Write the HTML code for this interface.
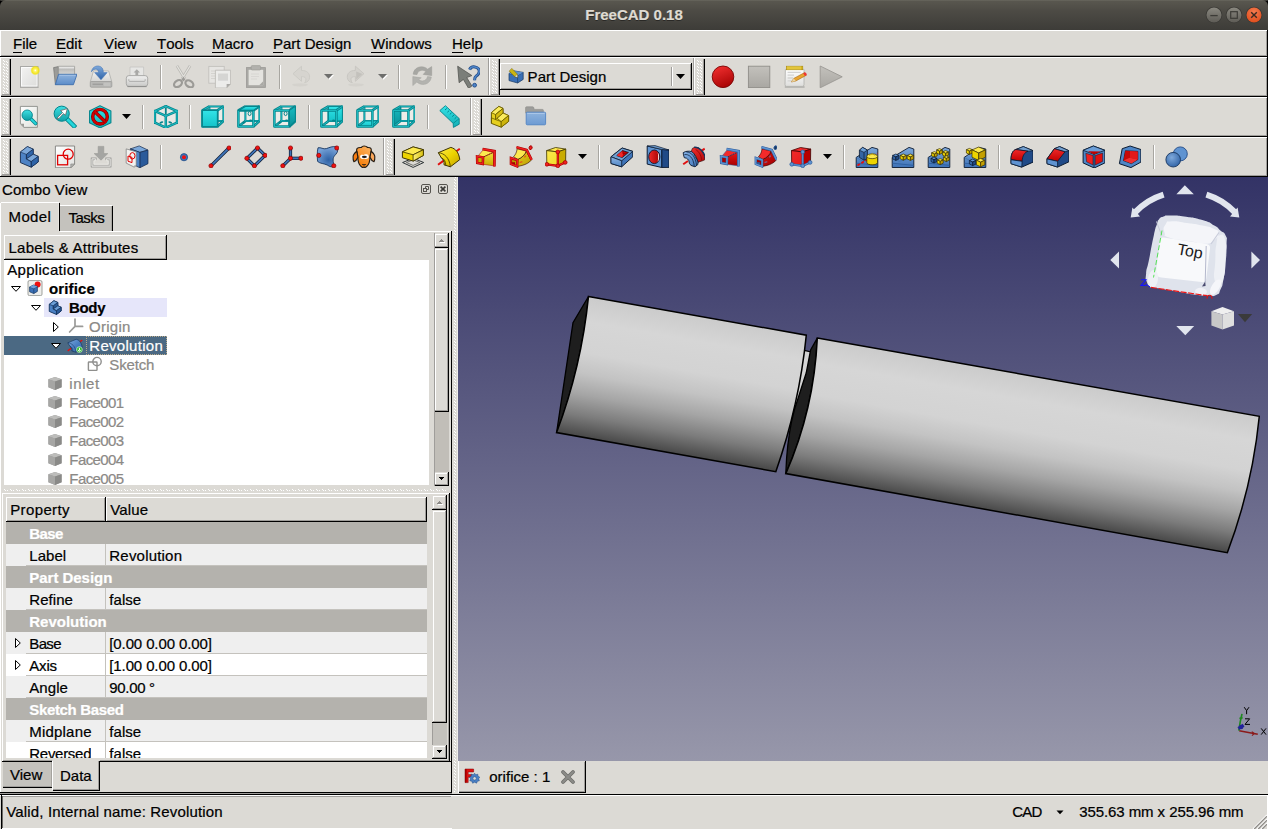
<!DOCTYPE html>
<html><head><meta charset="utf-8"><title>FreeCAD 0.18</title>
<style>
html,body{margin:0;padding:0;}
body{width:1268px;height:830px;overflow:hidden;background:#dcdad5;position:relative;font-family:"Liberation Sans",sans-serif;}
div,svg{position:absolute;box-sizing:border-box;}
.t{white-space:nowrap;line-height:20px;height:20px;-webkit-text-stroke:0.22px currentColor;}
u{text-decoration:none;border-bottom:1px solid #000;display:inline-block;line-height:13px;padding-bottom:2px;}
</style></head>
<body>
<div style="left:0px;top:0px;width:1268px;height:8px;background:#000;"></div>
<div style="left:0px;top:0px;width:1268px;height:30px;background:linear-gradient(#5a5850 0%,#4d4b45 35%,#3d3c38 100%);border-radius:6px 6px 0 0;"></div>
<div style="left:0px;top:0px;width:1268px;height:1px;background:#6b6960;border-radius:6px 6px 0 0;opacity:.6"></div>
<div class="t" style="left:534px;top:5px;font-size:15px;color:#dfdbd2;font-weight:bold;letter-spacing:0px;text-align:center;text-shadow:0 1px 0 #2a2926;width:200px;">FreeCAD 0.18</div>
<svg style="left:1205px;top:6px" width="18" height="18" viewBox="0 0 18 18"><defs><linearGradient id="gmin" x1="0" y1="0" x2="0" y2="1"><stop offset="0" stop-color="#8a8880"/><stop offset="1" stop-color="#5e5c56"/></linearGradient></defs><circle cx="9" cy="9" r="8.3" fill="#3a3935"/><circle cx="9" cy="9" r="7.5" fill="url(#gmin)"/><path d="M5.3 9.6H12.7" stroke="#3c3b37" stroke-width="1.3"/></svg>
<svg style="left:1225px;top:6px" width="18" height="18" viewBox="0 0 18 18"><defs><linearGradient id="gmax" x1="0" y1="0" x2="0" y2="1"><stop offset="0" stop-color="#8a8880"/><stop offset="1" stop-color="#5e5c56"/></linearGradient></defs><circle cx="9" cy="9" r="8.3" fill="#3a3935"/><circle cx="9" cy="9" r="7.5" fill="url(#gmax)"/><rect x="5.7" y="5.7" width="6.6" height="6.6" fill="none" stroke="#3c3b37" stroke-width="1.2"/></svg>
<svg style="left:1245px;top:6px" width="18" height="18" viewBox="0 0 18 18"><defs><radialGradient id="gc" cx="50%" cy="30%" r="70%"><stop offset="0" stop-color="#f47b4f"/><stop offset="1" stop-color="#df4e1d"/></radialGradient></defs><circle cx="9" cy="9" r="8.3" fill="#3a3935"/><circle cx="9" cy="9" r="7.5" fill="url(#gc)"/><path d="M6.2 6.2L11.8 11.8M11.8 6.2L6.2 11.8" stroke="#3b2a22" stroke-width="1.4" fill="none"/></svg>
<div style="left:0px;top:30px;width:1268px;height:1px;background:#fff;"></div>
<div style="left:0px;top:30px;width:1px;height:27px;background:#fff;"></div>
<div style="left:0px;top:56px;width:1268px;height:1px;background:#000;"></div>
<div style="left:1px;top:55px;width:1266px;height:1px;background:#9f9d9a;"></div>
<div style="left:1266px;top:31px;width:1px;height:25px;background:#9f9d9a;"></div>
<div style="left:1267px;top:30px;width:1px;height:27px;background:#000;"></div>
<div class="t" style="left:13px;top:34px;font-size:15px;color:#000;font-weight:normal;letter-spacing:0px;"><u>F</u>ile</div>
<div class="t" style="left:56px;top:34px;font-size:15px;color:#000;font-weight:normal;letter-spacing:0px;"><u>E</u>dit</div>
<div class="t" style="left:104px;top:34px;font-size:15px;color:#000;font-weight:normal;letter-spacing:0px;"><u>V</u>iew</div>
<div class="t" style="left:157px;top:34px;font-size:15px;color:#000;font-weight:normal;letter-spacing:0px;"><u>T</u>ools</div>
<div class="t" style="left:212px;top:34px;font-size:15px;color:#000;font-weight:normal;letter-spacing:0px;"><u>M</u>acro</div>
<div class="t" style="left:273px;top:34px;font-size:15px;color:#000;font-weight:normal;letter-spacing:0px;"><u>P</u>art Design</div>
<div class="t" style="left:371px;top:34px;font-size:15px;color:#000;font-weight:normal;letter-spacing:0px;"><u>W</u>indows</div>
<div class="t" style="left:452px;top:34px;font-size:15px;color:#000;font-weight:normal;letter-spacing:0px;"><u>H</u>elp</div>
<div style="left:0px;top:57px;width:1268px;height:1px;background:#fff;"></div>
<div style="left:0px;top:96px;width:1268px;height:1px;background:#000;"></div>
<div style="left:1px;top:95px;width:1266px;height:1px;background:#9f9d9a;"></div>
<div style="left:1266px;top:58px;width:1px;height:38px;background:#9f9d9a;"></div>
<div style="left:1267px;top:57px;width:1px;height:40px;background:#000;"></div>
<div style="left:0px;top:97px;width:1268px;height:1px;background:#fff;"></div>
<div style="left:0px;top:136px;width:1268px;height:1px;background:#000;"></div>
<div style="left:1px;top:135px;width:1266px;height:1px;background:#9f9d9a;"></div>
<div style="left:1266px;top:98px;width:1px;height:38px;background:#9f9d9a;"></div>
<div style="left:1267px;top:97px;width:1px;height:40px;background:#000;"></div>
<div style="left:0px;top:137px;width:1268px;height:1px;background:#fff;"></div>
<div style="left:0px;top:176px;width:1268px;height:1px;background:#000;"></div>
<div style="left:1px;top:175px;width:1266px;height:1px;background:#9f9d9a;"></div>
<div style="left:1266px;top:138px;width:1px;height:38px;background:#9f9d9a;"></div>
<div style="left:1267px;top:137px;width:1px;height:40px;background:#000;"></div>
<div style="left:0px;top:57px;width:1px;height:120px;background:#fff;"></div>
<svg width="0" height="0" style="left:0;top:0"><defs><pattern id="hatch" width="2" height="2" patternUnits="userSpaceOnUse"><rect width="2" height="2" fill="#dcdad5"/><rect x="0" y="0" width="1" height="1" fill="#fff"/><rect x="1" y="1" width="1" height="1" fill="#fff"/></pattern><pattern id="hdl" width="8" height="3" patternUnits="userSpaceOnUse"><rect x="1" y="0" width="1" height="1" fill="#fff"/><rect x="2" y="1" width="1" height="1" fill="#fff"/><rect x="4" y="1" width="1" height="1" fill="#fff"/><rect x="5" y="2" width="1" height="1" fill="#fff"/></pattern><pattern id="vsp" width="2" height="3" patternUnits="userSpaceOnUse"><rect x="0" y="2" width="1" height="1" fill="#fff"/><rect x="1" y="0" width="1" height="1" fill="#fff"/></pattern><pattern id="hsp" width="6" height="2" patternUnits="userSpaceOnUse"><rect x="0" y="0" width="1" height="1" fill="#fff"/><rect x="1" y="1" width="1" height="1" fill="#fff"/><rect x="3" y="1" width="1" height="1" fill="#fff"/></pattern></defs></svg>
<svg style="left:2px;top:60px" width="7" height="34" viewBox="0 0 7 34"><rect width="7" height="34" fill="url(#hdl)"/></svg>
<div style="left:9px;top:59px;width:1px;height:36px;background:#9f9d9a;"></div>
<div style="left:10px;top:59px;width:1px;height:36px;background:#000;"></div>
<div style="left:2px;top:94px;width:8px;height:1px;background:#9f9d9a;"></div>
<div style="left:488px;top:58px;width:1px;height:37px;background:#9f9d9a;"></div>
<div style="left:489px;top:58px;width:1px;height:37px;background:#fff;"></div>
<svg style="left:491px;top:60px" width="7" height="34" viewBox="0 0 7 34"><rect width="7" height="34" fill="url(#hdl)"/></svg>
<div style="left:498px;top:59px;width:1px;height:36px;background:#9f9d9a;"></div>
<div style="left:499px;top:59px;width:1px;height:36px;background:#000;"></div>
<div style="left:491px;top:94px;width:8px;height:1px;background:#9f9d9a;"></div>
<div style="left:693px;top:58px;width:1px;height:37px;background:#9f9d9a;"></div>
<div style="left:694px;top:58px;width:1px;height:37px;background:#fff;"></div>
<svg style="left:696px;top:60px" width="7" height="34" viewBox="0 0 7 34"><rect width="7" height="34" fill="url(#hdl)"/></svg>
<div style="left:703px;top:59px;width:1px;height:36px;background:#9f9d9a;"></div>
<div style="left:704px;top:59px;width:1px;height:36px;background:#000;"></div>
<div style="left:696px;top:94px;width:8px;height:1px;background:#9f9d9a;"></div>
<svg style="left:2px;top:100px" width="7" height="34" viewBox="0 0 7 34"><rect width="7" height="34" fill="url(#hdl)"/></svg>
<div style="left:9px;top:99px;width:1px;height:36px;background:#9f9d9a;"></div>
<div style="left:10px;top:99px;width:1px;height:36px;background:#000;"></div>
<div style="left:2px;top:134px;width:8px;height:1px;background:#9f9d9a;"></div>
<div style="left:470px;top:98px;width:1px;height:37px;background:#9f9d9a;"></div>
<div style="left:471px;top:98px;width:1px;height:37px;background:#fff;"></div>
<svg style="left:473px;top:100px" width="7" height="34" viewBox="0 0 7 34"><rect width="7" height="34" fill="url(#hdl)"/></svg>
<div style="left:480px;top:99px;width:1px;height:36px;background:#9f9d9a;"></div>
<div style="left:481px;top:99px;width:1px;height:36px;background:#000;"></div>
<div style="left:473px;top:134px;width:8px;height:1px;background:#9f9d9a;"></div>
<svg style="left:2px;top:140px" width="7" height="34" viewBox="0 0 7 34"><rect width="7" height="34" fill="url(#hdl)"/></svg>
<div style="left:9px;top:139px;width:1px;height:36px;background:#9f9d9a;"></div>
<div style="left:10px;top:139px;width:1px;height:36px;background:#000;"></div>
<div style="left:2px;top:174px;width:8px;height:1px;background:#9f9d9a;"></div>
<div style="left:383px;top:138px;width:1px;height:37px;background:#9f9d9a;"></div>
<div style="left:384px;top:138px;width:1px;height:37px;background:#fff;"></div>
<svg style="left:386px;top:140px" width="7" height="34" viewBox="0 0 7 34"><rect width="7" height="34" fill="url(#hdl)"/></svg>
<div style="left:393px;top:139px;width:1px;height:36px;background:#9f9d9a;"></div>
<div style="left:394px;top:139px;width:1px;height:36px;background:#000;"></div>
<div style="left:386px;top:174px;width:8px;height:1px;background:#9f9d9a;"></div>
<div style="left:458px;top:177px;width:810px;height:584px;background:linear-gradient(#333366,#9797aa);"></div>
<div style="left:0px;top:176px;width:1268px;height:1px;background:#000;"></div>
<div class="t" style="left:2px;top:180px;font-size:15px;color:#000;font-weight:normal;letter-spacing:0.054px;">Combo View</div>
<svg style="left:420px;top:183px" width="30" height="12" viewBox="0 0 30 12"><g fill="none" stroke="#55534e" stroke-width="1"><rect x="1.5" y="1.5" width="9" height="9" rx="1.5"/><rect x="3.5" y="5.5" width="3" height="3" /><path d="M5.5 5.5V3.5H8.5V6.5H6.5"/><rect x="18.5" y="1.5" width="9" height="9" rx="1.5"/></g><path d="M20.6 3.6L25.4 8.4M25.4 3.6L20.6 8.4" stroke="#3a3936" stroke-width="1.6"/></svg>
<div style="left:1px;top:202px;width:58px;height:1px;background:#fff;"></div>
<div style="left:59px;top:203px;width:1px;height:28px;background:#000;"></div>
<div style="left:58px;top:203px;width:1px;height:28px;background:#e6e4df;"></div>
<div class="t" style="left:8.5px;top:207px;font-size:15px;color:#000;font-weight:normal;letter-spacing:0.389px;">Model</div>
<div style="left:60px;top:206px;width:52px;height:25px;background:#c4c2bd;"></div>
<div style="left:60px;top:205px;width:52px;height:1px;background:#fff;"></div>
<div style="left:112px;top:206px;width:1px;height:25px;background:#000;"></div>
<div style="left:111px;top:206px;width:1px;height:25px;background:#aaa8a3;"></div>
<div class="t" style="left:68.4px;top:208px;font-size:15px;color:#000;font-weight:normal;letter-spacing:-0.488px;">Tasks</div>
<div style="left:60px;top:231px;width:391px;height:1px;background:#fff;"></div>
<div style="left:451px;top:231px;width:1px;height:562px;background:#000;"></div>
<div style="left:0px;top:203px;width:1px;height:590px;background:#fff;"></div>
<div style="left:4px;top:235px;width:163px;height:1px;background:#fff;"></div>
<div style="left:4px;top:235px;width:1px;height:25px;background:#fff;"></div>
<div style="left:166px;top:235px;width:1px;height:25px;background:#000;"></div>
<div style="left:4px;top:259px;width:163px;height:1px;background:#000;"></div>
<div style="left:165px;top:236px;width:1px;height:23px;background:#9f9d9a;"></div>
<div style="left:5px;top:258px;width:161px;height:1px;background:#9f9d9a;"></div>
<div class="t" style="left:8.5px;top:238px;font-size:15px;color:#000;font-weight:normal;letter-spacing:0.254px;">Labels &amp; Attributes</div>
<div style="left:4px;top:260px;width:425px;height:225px;background:#fff;"></div>
<div class="t" style="left:7.2px;top:260px;font-size:15px;color:#000;font-weight:normal;letter-spacing:0.311px;">Application</div>
<svg style="left:10.5px;top:286px" width="10" height="6" viewBox="0 0 10 6"><path d="M0.5 0.5H9.5L5 5.3Z" fill="#fff" stroke="#000" stroke-width="1"/></svg>
<svg style="left:27px;top:280px" width="16" height="16" viewBox="0 0 16 16"><rect x="1" y="0.6" width="14" height="15" rx="1.4" fill="#eeeeec" stroke="#888a85" stroke-width=".8"/><circle cx="10.6" cy="4.4" r="3" fill="#ef1010"/><path d="M2.6 7L6.4 5L10.4 6.6V11.4L6.8 13.6L2.6 11.8Z" fill="#3a6fb5" stroke="#17365f" stroke-width=".7" stroke-linejoin="round"/><path d="M2.6 7L6.8 8.6L10.4 6.6M6.8 8.6V13.6" fill="none" stroke="#17365f" stroke-width=".6"/><path d="M2.6 7L6.4 5L10.4 6.6L6.8 8.6Z" fill="#6c9fd8"/></svg>
<div class="t" style="left:49px;top:279px;font-size:15px;color:#000;font-weight:bold;letter-spacing:0.141px;">orifice</div>
<div style="left:44px;top:298px;width:123px;height:19px;background:#e6e6fa;"></div>
<svg style="left:30.5px;top:305px" width="10" height="6" viewBox="0 0 10 6"><path d="M0.5 0.5H9.5L5 5.3Z" fill="#fff" stroke="#000" stroke-width="1"/></svg>
<svg style="left:47px;top:299px" width="16" height="16" viewBox="0 0 16 16"><g transform="scale(.667)"><path d="M3.4 8L10.4 2.6L16.2 5.2V10.2L21.2 12.4V18L14.2 23.2L3.4 18.6Z" fill="#4a80c4" stroke="#17365f" stroke-width="1.4000000000000001" stroke-linejoin="round"/><path d="M3.4 8L10.4 2.6L16.2 5.2L9.4 10.4Z" fill="#6c9fd8" stroke="#17365f" stroke-width="1.1" stroke-linejoin="round"/><path d="M9.4 10.4L16.2 5.2V10.2L10 14.4V14.4L9.4 15Z" fill="#2a5a9a" stroke="#17365f" stroke-width="1.1" stroke-linejoin="round"/><path d="M9.4 15L16.2 10.2L21.2 12.4L14.2 17.6Z" fill="#6c9fd8" stroke="#17365f" stroke-width="1.1" stroke-linejoin="round"/><path d="M14.2 17.6L21.2 12.4V18L14.2 23.2Z" fill="#2a5a9a" stroke="#17365f" stroke-width="1.1" stroke-linejoin="round"/><path d="M9.4 10.4V15L14.2 17.6V23.2" fill="none" stroke="#17365f" stroke-width="1.1"/></g></svg>
<div class="t" style="left:69px;top:298px;font-size:15px;color:#000;font-weight:bold;letter-spacing:-0.325px;">Body</div>
<svg style="left:53px;top:322px" width="6" height="10" viewBox="0 0 6 10"><path d="M0.5 0.5V9.5L5.3 5Z" fill="#fff" stroke="#000" stroke-width="1"/></svg>
<svg style="left:68px;top:318px" width="16" height="16" viewBox="0 0 16 16"><path d="M7 1V8.4L1.6 14M7 8.4H14.6" fill="none" stroke="#9a9a98" stroke-width="1.7" stroke-linecap="round" stroke-linejoin="round"/></svg>
<div class="t" style="left:89px;top:317px;font-size:15px;color:#8b8986;font-weight:normal;letter-spacing:0.265px;">Origin</div>
<div style="left:4px;top:336px;width:163px;height:19px;background:#4b6983;"></div>
<div style="left:86px;top:336px;width:81px;height:19px;border:1px dotted #b9a98a;"></div>
<svg style="left:51px;top:343px" width="10" height="6" viewBox="0 0 10 6"><path d="M0.5 0.5H9.5L5 5.3Z" fill="#fff" stroke="#000" stroke-width="1"/></svg>
<svg style="left:67px;top:337px" width="16" height="16" viewBox="0 0 16 16"><g transform="scale(.667)"><defs><linearGradient id="g49" x1="0" y1="0" x2="1" y2="1"><stop offset="0" stop-color="#7fa9db"/><stop offset="0.5" stop-color="#4a80c4"/><stop offset="1" stop-color="#2f62a5"/></linearGradient></defs><path d="M1 20.8L7 16.4" stroke="#e01010" stroke-width="2"/><path d="M17 9L22.8 4.7" stroke="#e01010" stroke-width="2"/><path d="M1.3 8.7L13.8 3.4C18.6 4.6 21.8 8.4 22.8 15.6L13.4 22.8L7 20.8C7.4 17.4 6.6 15.4 4.4 14Z" fill="url(#g49)" stroke="#17365f" stroke-width="1" stroke-linejoin="round"/><path d="M1.3 8.7C7.6 9.2 12.4 14 13.4 22.8M4.4 14C7 14.6 8.6 17 8.8 21.4" fill="none" stroke="#17365f" stroke-width=".8"/></g><circle cx="12.4" cy="12.6" r="2.9" fill="#2bb62b" stroke="#e6ffe6" stroke-width=".6"/><path d="M12.4 10.8V13.4M11 12.8L12.4 14.4L13.8 12.8" stroke="#fff" stroke-width="1" fill="none"/></svg>
<div class="t" style="left:89.3px;top:336px;font-size:15px;color:#fff;font-weight:normal;letter-spacing:0.283px;">Revolution</div>
<svg style="left:87px;top:356px" width="16" height="16" viewBox="0 0 16 16"><rect x="1.4" y="6" width="8.6" height="8.4" rx=".6" fill="none" stroke="#8f8f8d" stroke-width="1.4"/><circle cx="10" cy="5.6" r="4.2" fill="none" stroke="#8f8f8d" stroke-width="1.4"/></svg>
<div class="t" style="left:109.3px;top:355px;font-size:15px;color:#8b8986;font-weight:normal;letter-spacing:-0.143px;">Sketch</div>
<svg style="left:47px;top:375px" width="16" height="16" viewBox="0 0 16 16"><path d="M1.4 4.2L8 2L14.6 4.2V12.2L8 15L1.4 12.2Z" fill="#9b9b99"/><path d="M1.4 4.2L8 2L14.6 4.2L8 6.6Z" fill="#bdbdbb"/><path d="M8 6.6L14.6 4.2V12.2L8 15Z" fill="#8a8a88"/><path d="M1.4 4.2L8 6.6V15L1.4 12.2Z" fill="#a6a6a4"/></svg>
<div class="t" style="left:69.3px;top:374px;font-size:15px;color:#8b8986;font-weight:normal;letter-spacing:0.597px;">inlet</div>
<svg style="left:47px;top:394px" width="16" height="16" viewBox="0 0 16 16"><path d="M1.4 4.2L8 2L14.6 4.2V12.2L8 15L1.4 12.2Z" fill="#9b9b99"/><path d="M1.4 4.2L8 2L14.6 4.2L8 6.6Z" fill="#bdbdbb"/><path d="M8 6.6L14.6 4.2V12.2L8 15Z" fill="#8a8a88"/><path d="M1.4 4.2L8 6.6V15L1.4 12.2Z" fill="#a6a6a4"/></svg>
<div class="t" style="left:69.3px;top:393px;font-size:15px;color:#8b8986;font-weight:normal;letter-spacing:-0.582px;">Face001</div>
<svg style="left:47px;top:413px" width="16" height="16" viewBox="0 0 16 16"><path d="M1.4 4.2L8 2L14.6 4.2V12.2L8 15L1.4 12.2Z" fill="#9b9b99"/><path d="M1.4 4.2L8 2L14.6 4.2L8 6.6Z" fill="#bdbdbb"/><path d="M8 6.6L14.6 4.2V12.2L8 15Z" fill="#8a8a88"/><path d="M1.4 4.2L8 6.6V15L1.4 12.2Z" fill="#a6a6a4"/></svg>
<div class="t" style="left:69.3px;top:412px;font-size:15px;color:#8b8986;font-weight:normal;letter-spacing:-0.582px;">Face002</div>
<svg style="left:47px;top:432px" width="16" height="16" viewBox="0 0 16 16"><path d="M1.4 4.2L8 2L14.6 4.2V12.2L8 15L1.4 12.2Z" fill="#9b9b99"/><path d="M1.4 4.2L8 2L14.6 4.2L8 6.6Z" fill="#bdbdbb"/><path d="M8 6.6L14.6 4.2V12.2L8 15Z" fill="#8a8a88"/><path d="M1.4 4.2L8 6.6V15L1.4 12.2Z" fill="#a6a6a4"/></svg>
<div class="t" style="left:69.3px;top:431px;font-size:15px;color:#8b8986;font-weight:normal;letter-spacing:-0.582px;">Face003</div>
<svg style="left:47px;top:451px" width="16" height="16" viewBox="0 0 16 16"><path d="M1.4 4.2L8 2L14.6 4.2V12.2L8 15L1.4 12.2Z" fill="#9b9b99"/><path d="M1.4 4.2L8 2L14.6 4.2L8 6.6Z" fill="#bdbdbb"/><path d="M8 6.6L14.6 4.2V12.2L8 15Z" fill="#8a8a88"/><path d="M1.4 4.2L8 6.6V15L1.4 12.2Z" fill="#a6a6a4"/></svg>
<div class="t" style="left:69.3px;top:450px;font-size:15px;color:#8b8986;font-weight:normal;letter-spacing:-0.582px;">Face004</div>
<svg style="left:47px;top:470px" width="16" height="16" viewBox="0 0 16 16"><path d="M1.4 4.2L8 2L14.6 4.2V12.2L8 15L1.4 12.2Z" fill="#9b9b99"/><path d="M1.4 4.2L8 2L14.6 4.2L8 6.6Z" fill="#bdbdbb"/><path d="M8 6.6L14.6 4.2V12.2L8 15Z" fill="#8a8a88"/><path d="M1.4 4.2L8 6.6V15L1.4 12.2Z" fill="#a6a6a4"/></svg>
<div class="t" style="left:69.3px;top:469px;font-size:15px;color:#8b8986;font-weight:normal;letter-spacing:-0.582px;">Face005</div>
<div style="left:1px;top:485px;width:450px;height:8px;background:#dcdad5;"></div>
<div style="left:434px;top:233px;width:15px;height:253px;background:#c1beb8;"></div>
<div style="left:434px;top:233px;width:15px;height:15px;background:#dcdad5;"></div>
<div style="left:434px;top:233px;width:1px;height:15px;background:#dcdad5;"></div>
<div style="left:434px;top:233px;width:15px;height:1px;background:#dcdad5;"></div>
<div style="left:435px;top:234px;width:1px;height:13px;background:#fff;"></div>
<div style="left:435px;top:234px;width:13px;height:1px;background:#fff;"></div>
<div style="left:448px;top:233px;width:1px;height:15px;background:#000;"></div>
<div style="left:434px;top:247px;width:15px;height:1px;background:#000;"></div>
<div style="left:447px;top:234px;width:1px;height:13px;background:#9f9d9a;"></div>
<div style="left:435px;top:246px;width:13px;height:1px;background:#9f9d9a;"></div>
<div style="left:442px;top:240px;width:1px;height:1px;background:#fff;"></div>
<div style="left:441px;top:241px;width:3px;height:1px;background:#fff;"></div>
<div style="left:440px;top:242px;width:5px;height:1px;background:#fff;"></div>
<div style="left:441px;top:239px;width:1px;height:1px;background:#8a8885;"></div>
<div style="left:440px;top:240px;width:3px;height:1px;background:#8a8885;"></div>
<div style="left:439px;top:241px;width:5px;height:1px;background:#8a8885;"></div>
<div style="left:434px;top:248px;width:15px;height:164px;background:#dcdad5;"></div>
<div style="left:435px;top:249px;width:1px;height:162px;background:#fff;"></div>
<div style="left:435px;top:249px;width:13px;height:1px;background:#fff;"></div>
<div style="left:448px;top:248px;width:1px;height:164px;background:#000;"></div>
<div style="left:434px;top:411px;width:15px;height:1px;background:#000;"></div>
<div style="left:447px;top:249px;width:1px;height:162px;background:#9f9d9a;"></div>
<div style="left:435px;top:410px;width:13px;height:1px;background:#9f9d9a;"></div>
<div style="left:434px;top:472px;width:15px;height:14px;background:#dcdad5;"></div>
<div style="left:434px;top:472px;width:1px;height:14px;background:#dcdad5;"></div>
<div style="left:434px;top:472px;width:15px;height:1px;background:#dcdad5;"></div>
<div style="left:435px;top:473px;width:1px;height:12px;background:#fff;"></div>
<div style="left:435px;top:473px;width:13px;height:1px;background:#fff;"></div>
<div style="left:448px;top:472px;width:1px;height:14px;background:#000;"></div>
<div style="left:434px;top:485px;width:15px;height:1px;background:#000;"></div>
<div style="left:447px;top:473px;width:1px;height:12px;background:#9f9d9a;"></div>
<div style="left:435px;top:484px;width:13px;height:1px;background:#9f9d9a;"></div>
<div style="left:439px;top:477px;width:5px;height:1px;background:#000;"></div>
<div style="left:440px;top:478px;width:3px;height:1px;background:#000;"></div>
<div style="left:441px;top:479px;width:1px;height:1px;background:#000;"></div>
<div style="left:434px;top:233px;width:1px;height:253px;background:#9f9d9a;"></div>
<svg style="left:454px;top:177px" width="2" height="615" viewBox="0 0 2 615"><rect width="2" height="615" fill="url(#vsp)"/></svg>
<div style="left:457px;top:177px;width:1px;height:584px;background:#efede9;"></div>
<svg style="left:4px;top:489px" width="442" height="2" viewBox="0 0 442 2"><rect width="442" height="2" fill="url(#hsp)"/></svg>
<div style="left:2px;top:493px;width:448px;height:1px;background:#fff;"></div>
<div style="left:2px;top:493px;width:1px;height:268px;background:#fff;"></div>
<div style="left:449px;top:493px;width:1px;height:268px;background:#000;"></div>
<div style="left:2px;top:761px;width:449px;height:1px;background:#000;"></div>
<div style="left:448px;top:494px;width:1px;height:267px;background:#9f9d9a;"></div>
<div style="left:3px;top:760px;width:446px;height:1px;background:#9f9d9a;"></div>
<div style="left:6px;top:497px;width:421px;height:1px;background:#fff;"></div>
<div style="left:6px;top:497px;width:1px;height:25px;background:#fff;"></div>
<div style="left:105px;top:497px;width:1px;height:25px;background:#000;"></div>
<div style="left:104px;top:498px;width:1px;height:23px;background:#9f9d9a;"></div>
<div style="left:106px;top:497px;width:1px;height:24px;background:#fff;"></div>
<div style="left:426px;top:497px;width:1px;height:25px;background:#000;"></div>
<div style="left:425px;top:498px;width:1px;height:23px;background:#9f9d9a;"></div>
<div style="left:6px;top:521px;width:421px;height:1px;background:#000;"></div>
<div style="left:7px;top:520px;width:98px;height:1px;background:#9f9d9a;"></div>
<div style="left:107px;top:520px;width:318px;height:1px;background:#9f9d9a;"></div>
<div class="t" style="left:10.2px;top:500px;font-size:15px;color:#000;font-weight:normal;letter-spacing:0.376px;">Property</div>
<div class="t" style="left:110.3px;top:500px;font-size:15px;color:#000;font-weight:normal;letter-spacing:0.13px;">Value</div>
<div style="left:6px;top:522px;width:421px;height:22px;background:#b4b2ad;"></div>
<div class="t" style="left:29.3px;top:524px;font-size:15px;color:#fff;font-weight:bold;letter-spacing:-0.589px;">Base</div>
<div style="left:6px;top:544px;width:421px;height:22px;background:#efefef;"></div>
<div style="left:26px;top:565px;width:401px;height:1px;background:#c4c2bd;"></div>
<div style="left:105px;top:544px;width:1px;height:22px;background:#c4c2bd;"></div>
<div class="t" style="left:29.3px;top:546px;font-size:15px;color:#000;font-weight:normal;letter-spacing:0.02px;">Label</div>
<div class="t" style="left:109.3px;top:546px;font-size:15px;color:#000;font-weight:normal;letter-spacing:0.203px;">Revolution</div>
<div style="left:6px;top:566px;width:421px;height:22px;background:#b4b2ad;"></div>
<div class="t" style="left:29.3px;top:568px;font-size:15px;color:#fff;font-weight:bold;letter-spacing:-0.032px;">Part Design</div>
<div style="left:6px;top:588px;width:421px;height:22px;background:#efefef;"></div>
<div style="left:26px;top:609px;width:401px;height:1px;background:#c4c2bd;"></div>
<div style="left:105px;top:588px;width:1px;height:22px;background:#c4c2bd;"></div>
<div class="t" style="left:29.3px;top:590px;font-size:15px;color:#000;font-weight:normal;letter-spacing:0.057px;">Refine</div>
<div class="t" style="left:109.3px;top:590px;font-size:15px;color:#000;font-weight:normal;letter-spacing:0.043px;">false</div>
<div style="left:6px;top:610px;width:421px;height:22px;background:#b4b2ad;"></div>
<div class="t" style="left:29.3px;top:612px;font-size:15px;color:#fff;font-weight:bold;letter-spacing:-0.01px;">Revolution</div>
<div style="left:6px;top:632px;width:421px;height:22px;background:#efefef;"></div>
<div style="left:26px;top:653px;width:401px;height:1px;background:#c4c2bd;"></div>
<div style="left:105px;top:632px;width:1px;height:22px;background:#c4c2bd;"></div>
<div class="t" style="left:29.3px;top:634px;font-size:15px;color:#000;font-weight:normal;letter-spacing:-0.647px;">Base</div>
<div class="t" style="left:109.3px;top:634px;font-size:15px;color:#000;font-weight:normal;letter-spacing:-0.116px;">[0.00 0.00 0.00]</div>
<svg style="left:15px;top:638px" width="6" height="10" viewBox="0 0 6 10"><path d="M0.5 0.5V9.5L5.3 5Z" fill="#fff" stroke="#000" stroke-width="1"/></svg>
<div style="left:6px;top:654px;width:421px;height:22px;background:#fff;"></div>
<div style="left:26px;top:675px;width:401px;height:1px;background:#c4c2bd;"></div>
<div style="left:105px;top:654px;width:1px;height:22px;background:#c4c2bd;"></div>
<div class="t" style="left:29.3px;top:656px;font-size:15px;color:#000;font-weight:normal;letter-spacing:-0.209px;">Axis</div>
<div class="t" style="left:109.3px;top:656px;font-size:15px;color:#000;font-weight:normal;letter-spacing:-0.116px;">[1.00 0.00 0.00]</div>
<svg style="left:15px;top:660px" width="6" height="10" viewBox="0 0 6 10"><path d="M0.5 0.5V9.5L5.3 5Z" fill="#fff" stroke="#000" stroke-width="1"/></svg>
<div style="left:6px;top:676px;width:421px;height:22px;background:#efefef;"></div>
<div style="left:26px;top:697px;width:401px;height:1px;background:#c4c2bd;"></div>
<div style="left:105px;top:676px;width:1px;height:22px;background:#c4c2bd;"></div>
<div class="t" style="left:29.3px;top:678px;font-size:15px;color:#000;font-weight:normal;letter-spacing:0.067px;">Angle</div>
<div class="t" style="left:109.3px;top:678px;font-size:15px;color:#000;font-weight:normal;letter-spacing:-0.314px;">90.00 °</div>
<div style="left:6px;top:698px;width:421px;height:22px;background:#b4b2ad;"></div>
<div class="t" style="left:29.3px;top:700px;font-size:15px;color:#fff;font-weight:bold;letter-spacing:-0.348px;">Sketch Based</div>
<div style="left:6px;top:720px;width:421px;height:22px;background:#efefef;"></div>
<div style="left:26px;top:741px;width:401px;height:1px;background:#c4c2bd;"></div>
<div style="left:105px;top:720px;width:1px;height:22px;background:#c4c2bd;"></div>
<div class="t" style="left:29.3px;top:722px;font-size:15px;color:#000;font-weight:normal;letter-spacing:0.191px;">Midplane</div>
<div class="t" style="left:109.3px;top:722px;font-size:15px;color:#000;font-weight:normal;letter-spacing:0.043px;">false</div>
<div style="left:6px;top:742px;width:421px;height:16px;background:#fff;"></div>
<div style="left:105px;top:742px;width:1px;height:16px;background:#c4c2bd;"></div>
<div class="t" style="left:29.3px;top:744px;font-size:15px;color:#000;font-weight:normal;letter-spacing:-0.287px;height:14px;overflow:hidden;">Reversed</div>
<div class="t" style="left:109.3px;top:744px;font-size:15px;color:#000;font-weight:normal;letter-spacing:0.043px;height:14px;overflow:hidden;">false</div>
<div style="left:3px;top:760px;width:446px;height:1px;background:#9f9d9a;"></div>
<div style="left:432px;top:495px;width:15px;height:263px;background:#c4c2bd;"></div>
<div style="left:432px;top:495px;width:1px;height:263px;background:#9f9d9a;"></div>
<div style="left:432px;top:495px;width:15px;height:15px;background:#dcdad5;"></div>
<div style="left:432px;top:495px;width:1px;height:15px;background:#dcdad5;"></div>
<div style="left:432px;top:495px;width:15px;height:1px;background:#dcdad5;"></div>
<div style="left:433px;top:496px;width:1px;height:13px;background:#fff;"></div>
<div style="left:433px;top:496px;width:13px;height:1px;background:#fff;"></div>
<div style="left:446px;top:495px;width:1px;height:15px;background:#000;"></div>
<div style="left:432px;top:509px;width:15px;height:1px;background:#000;"></div>
<div style="left:445px;top:496px;width:1px;height:13px;background:#9f9d9a;"></div>
<div style="left:433px;top:508px;width:13px;height:1px;background:#9f9d9a;"></div>
<div style="left:440px;top:502px;width:1px;height:1px;background:#fff;"></div>
<div style="left:439px;top:503px;width:3px;height:1px;background:#fff;"></div>
<div style="left:438px;top:504px;width:5px;height:1px;background:#fff;"></div>
<div style="left:439px;top:501px;width:1px;height:1px;background:#8a8885;"></div>
<div style="left:438px;top:502px;width:3px;height:1px;background:#8a8885;"></div>
<div style="left:437px;top:503px;width:5px;height:1px;background:#8a8885;"></div>
<div style="left:432px;top:510px;width:15px;height:213px;background:#dcdad5;"></div>
<div style="left:433px;top:511px;width:1px;height:211px;background:#fff;"></div>
<div style="left:433px;top:511px;width:13px;height:1px;background:#fff;"></div>
<div style="left:446px;top:510px;width:1px;height:213px;background:#000;"></div>
<div style="left:432px;top:722px;width:15px;height:1px;background:#000;"></div>
<div style="left:445px;top:511px;width:1px;height:211px;background:#9f9d9a;"></div>
<div style="left:433px;top:721px;width:13px;height:1px;background:#9f9d9a;"></div>
<div style="left:432px;top:745px;width:15px;height:14px;background:#dcdad5;"></div>
<div style="left:432px;top:745px;width:1px;height:14px;background:#dcdad5;"></div>
<div style="left:432px;top:745px;width:15px;height:1px;background:#dcdad5;"></div>
<div style="left:433px;top:746px;width:1px;height:12px;background:#fff;"></div>
<div style="left:433px;top:746px;width:13px;height:1px;background:#fff;"></div>
<div style="left:446px;top:745px;width:1px;height:14px;background:#000;"></div>
<div style="left:432px;top:758px;width:15px;height:1px;background:#000;"></div>
<div style="left:445px;top:746px;width:1px;height:12px;background:#9f9d9a;"></div>
<div style="left:433px;top:757px;width:13px;height:1px;background:#9f9d9a;"></div>
<div style="left:437px;top:750px;width:5px;height:1px;background:#000;"></div>
<div style="left:438px;top:751px;width:3px;height:1px;background:#000;"></div>
<div style="left:439px;top:752px;width:1px;height:1px;background:#000;"></div>
<div style="left:451px;top:493px;width:1px;height:300px;background:#000;"></div>
<div style="left:0px;top:792px;width:452px;height:1px;background:#000;"></div>
<div style="left:0px;top:793px;width:452px;height:1px;background:#9f9d9a;"></div>
<div style="left:0px;top:794px;width:1268px;height:1px;background:#000;"></div>
<div style="left:0px;top:795px;width:1268px;height:1px;background:#fff;"></div>
<div style="left:3px;top:762px;width:48px;height:25px;background:#c4c2bd;"></div>
<div style="left:2px;top:761px;width:50px;height:1px;background:#000;"></div>
<div style="left:51px;top:762px;width:1px;height:25px;background:#a5a39e;"></div>
<div style="left:3px;top:787px;width:49px;height:1px;background:#000;"></div>
<div style="left:3px;top:786px;width:48px;height:1px;background:#9f9d9a;"></div>
<div class="t" style="left:10px;top:765px;font-size:15px;color:#000;font-weight:normal;letter-spacing:0px;">View</div>
<div style="left:52px;top:758px;width:48px;height:33px;background:#dcdad5;"></div>
<div style="left:52px;top:761px;width:1px;height:29px;background:#fff;"></div>
<div style="left:99px;top:761px;width:1px;height:30px;background:#000;"></div>
<div style="left:98px;top:761px;width:1px;height:29px;background:#9f9d9a;"></div>
<div style="left:53px;top:790px;width:46px;height:1px;background:#000;"></div>
<div style="left:53px;top:789px;width:45px;height:1px;background:#9f9d9a;"></div>
<div style="left:100px;top:761px;width:350px;height:1px;background:#000;"></div>
<div class="t" style="left:60px;top:766px;font-size:15px;color:#000;font-weight:normal;letter-spacing:0px;">Data</div>
<div style="left:1px;top:795px;width:1px;height:34px;background:#000;"></div>
<div style="left:2px;top:796px;width:1px;height:32px;background:#6b6964;"></div>
<div style="left:3px;top:796px;width:448px;height:1px;background:#9f9d9a;"></div>
<div style="left:2px;top:828px;width:450px;height:1px;background:#fff;"></div>
<div class="t" style="left:6.2px;top:802px;font-size:15px;color:#000;font-weight:normal;letter-spacing:0.159px;">Valid, Internal name: Revolution</div>
<div class="t" style="left:1012.3px;top:802px;font-size:15px;color:#000;font-weight:normal;letter-spacing:-0.79px;">CAD</div>
<svg style="left:1056px;top:810px" width="8" height="5" viewBox="0 0 8 5"><path d="M0.5 0.5H7.5L4 4.2Z" fill="#000"/></svg>
<div class="t" style="left:1079.2px;top:802px;font-size:15px;color:#000;font-weight:normal;letter-spacing:-0.077px;">355.63 mm x 255.96 mm</div>
<svg style="left:1252px;top:814px" width="15" height="15" viewBox="0 0 15 15"><g stroke="#fff" stroke-width="1.2"><path d="M1 15L15 1M5 15L15 5M9 15L15 9"/></g><g stroke="#8e8c88" stroke-width="1.3"><path d="M2.2 15L15 2.2M6.2 15L15 6.2M10.2 15L15 10.2"/></g></svg>
<div style="left:1267px;top:795px;width:1px;height:35px;background:#fff;"></div>
<div style="left:0px;top:829px;width:1268px;height:1px;background:#fff;"></div>
<div style="left:458px;top:761px;width:1px;height:32px;background:#fff;"></div>
<div style="left:585px;top:761px;width:1px;height:32px;background:#000;"></div>
<div style="left:584px;top:762px;width:1px;height:30px;background:#9f9d9a;"></div>
<div style="left:459px;top:792px;width:127px;height:1px;background:#000;"></div>
<div style="left:459px;top:791px;width:126px;height:1px;background:#9f9d9a;"></div>
<div class="t" style="left:489.2px;top:767px;font-size:15px;color:#000;font-weight:normal;letter-spacing:0.031px;">orifice : 1</div>
<svg style="left:458px;top:177px" width="810" height="584" viewBox="0 0 810 584"><defs><linearGradient id="cy1" gradientUnits="userSpaceOnUse" x1="588.5" y1="296.5" x2="564.2" y2="433.9"><stop offset="0" stop-color="#cbcbcb"/><stop offset=".18" stop-color="#d6d6d6"/><stop offset=".4" stop-color="#d3d3d3"/><stop offset=".55" stop-color="#c3c3c3"/><stop offset=".7" stop-color="#a5a5a5"/><stop offset=".85" stop-color="#7c7c7c"/><stop offset="1" stop-color="#484848"/></linearGradient><linearGradient id="cy2" gradientUnits="userSpaceOnUse" x1="817.3" y1="338.1" x2="793.0" y2="475.5"><stop offset="0" stop-color="#cbcbcb"/><stop offset=".18" stop-color="#d6d6d6"/><stop offset=".4" stop-color="#d3d3d3"/><stop offset=".55" stop-color="#c3c3c3"/><stop offset=".7" stop-color="#a5a5a5"/><stop offset=".85" stop-color="#7c7c7c"/><stop offset="1" stop-color="#484848"/></linearGradient></defs><g transform="translate(-458 -177)" stroke-linejoin="miter"><path d="M802 349.8 L811 352 L808 373 L796.5 410 L792.6 419 L789 419 Z" fill="url(#cy1)" stroke="#000" stroke-width="1.2"/><path d="M588.5 296.5 L573.0 322.6 L556.6 432.6 Q581.5 366.6 588.5 296.5Z" fill="#1e1e1e" stroke="#000" stroke-width="1.3"/><path d="M588.5 296.5 L806.3 335.2 Q799.2 405.3 775.8 471.7 L556.6 432.6 Q581.5 366.6 588.5 296.5Z" fill="url(#cy1)" stroke="#000" stroke-width="1.5"/><path d="M817.3 338.1 L810.6 350.0 L806.2 373 Q799.8 393 794.4 409.8 Q788.8 430 786.6 458 L785.8 473.6 Q814.2 408.8 817.3 338.1Z" fill="#1e1e1e" stroke="#000" stroke-width="1.3"/><path d="M817.3 338.1 L1259.3 416.3 Q1252.3 486.6 1227.3 552.7 L785.8 473.6 Q814.2 408.8 817.3 338.1Z" fill="url(#cy2)" stroke="#000" stroke-width="1.5"/></g></svg>
<svg style="left:1100px;top:177px" width="168" height="170" viewBox="1100 177 168 170"><path d="M1184.8 185.3L1176.4 194.3H1193.8Z" fill="#e1e5ee"/><path d="M1185.3 335.2L1176.3 326H1194.2Z" fill="#e1e5ee"/><path d="M1110.3 260.1L1119 251.5V268.6Z" fill="#e1e5ee"/><path d="M1260 260.1L1251.4 251.5V268.6Z" fill="#e1e5ee"/><path d="M1163.6 194.6A66 66 0 0 0 1134.8 212.6" fill="none" stroke="#e1e5ee" stroke-width="6.2"/><path d="M1130.7 217.6L1132.4 207.6L1140 216.6Z" fill="#e1e5ee"/><path d="M1206.4 194.6A66 66 0 0 1 1235.2 212.6" fill="none" stroke="#e1e5ee" stroke-width="6.2"/><path d="M1239.3 217.6L1237.6 207.6L1230 216.6Z" fill="#e1e5ee"/><path d="M1158.9 219.5C1161.1 216.9 1159.9 217.9 1163.5 216.6C1167.1 215.3 1162.9 215.7 1169.8 215.6C1176.7 215.5 1173.4 214.9 1184.2 216.4C1195.0 217.9 1192.3 217.0 1202.3 220.0C1212.3 223.0 1208.3 222.0 1214.3 225.5C1220.3 229.0 1216.6 227.2 1220.4 230.5C1224.2 233.8 1223.5 230.7 1225.6 235.5C1227.7 240.3 1226.7 234.9 1226.6 244.8C1226.5 254.7 1226.5 253.6 1225.4 265.2C1224.3 276.8 1225.0 271.7 1223.4 279.7C1221.8 287.7 1223.0 284.2 1220.6 289.3C1218.2 294.4 1220.7 292.9 1216.2 295.0C1211.7 297.1 1214.1 295.7 1207.1 295.6C1200.1 295.5 1204.7 296.1 1195.1 294.8C1185.5 293.5 1189.9 293.7 1178.2 291.7C1166.5 289.7 1169.1 290.3 1160.1 288.7C1151.1 287.1 1155.5 289.1 1151.1 286.9C1146.7 284.7 1148.6 286.5 1146.9 282.1C1145.2 277.7 1145.4 281.3 1146.1 273.7C1146.8 266.1 1146.5 272.1 1149.1 259.2C1151.7 246.3 1151.3 246.7 1153.9 235.1C1156.5 223.5 1155.2 229.5 1156.9 224.3C1158.6 219.1 1156.7 222.1 1158.9 219.5Z" fill="#dfe3ec"/><path d="M1165.5 224.5C1168.0 220.7 1165.0 221.8 1172.2 221.3C1179.4 220.8 1177.0 221.6 1187.0 223.0C1197.0 224.4 1193.2 223.5 1202.3 225.5C1211.4 227.5 1208.9 226.5 1214.3 229.1C1219.7 231.7 1218.4 229.7 1218.4 233.3C1218.4 236.9 1218.9 236.4 1214.3 239.9C1209.7 243.4 1212.7 243.3 1204.7 243.8C1196.7 244.3 1201.8 243.3 1190.2 241.3C1178.6 239.3 1178.3 240.6 1169.8 237.7C1161.3 234.8 1166.0 237.1 1164.6 232.7C1163.2 228.3 1163.0 228.3 1165.5 224.5Z" fill="#f4f5f9"/><path d="M1219.8 235.3C1222.8 234.1 1223.5 233.5 1225.4 241.1C1227.3 248.7 1225.9 245.9 1225.4 258.0C1224.9 270.1 1225.9 269.2 1223.8 277.3C1221.7 285.4 1222.3 281.5 1219.2 282.3C1216.1 283.1 1215.8 286.5 1214.5 279.7C1213.2 272.9 1214.6 273.6 1215.2 262.0C1215.8 250.4 1214.8 253.7 1216.3 244.8C1217.8 235.9 1216.8 236.5 1219.8 235.3Z" fill="#eef0f5"/><path d="M1163.5 237.6 L1206.5 243.9 Q1210.6 244.6 1210 248.5 L1206.3 278.5 Q1205.6 282.6 1201.5 282.1 L1161.3 277.4 Q1155.3 276.6 1156.1 271.5 L1159.8 241.5 Q1160.3 237.2 1163.5 237.6Z" fill="#f8f9fb"/><path d="M1206.2 246L1205.2 282" stroke="#b4b8cc" stroke-width="1" fill="none"/><ellipse cx="1215.6" cy="287" rx="4" ry="8.6" transform="rotate(32 1215.6 287)" fill="#f5f6fa"/><ellipse cx="1153" cy="279" rx="5" ry="9" transform="rotate(8 1153 279)" fill="#eff1f6"/><ellipse cx="1201" cy="291.5" rx="6" ry="3.6" transform="rotate(8 1201 291.5)" fill="#f1f2f7"/><path d="M1202 286.5L1205.2 281.6L1205.6 286Z" fill="#4a4b70"/><path d="M1156.5 221.5L1161.5 235" stroke="#c9cddb" stroke-width="1" fill="none"/><path d="M1219 232.5L1211 244" stroke="#c9cddb" stroke-width="1.2" fill="none"/><path d="M1162 230.5L1153.5 277.5" stroke="#30e030" stroke-width=".8" stroke-dasharray="5 2.5" fill="none"/><path d="M1151 287.4L1207 295.7" stroke="#f01818" stroke-width="1.2" stroke-dasharray="6 1.5" fill="none"/><path d="M1141 279.8H1146L1141 285.4H1146.4" stroke="#1414ff" stroke-width="1.1" fill="none"/><path d="M1146 284L1150 287" stroke="#1414ff" stroke-width="1"/><path d="M1207 298.8Q1207 295.3 1209.5 295.3Q1212 295.3 1212 298.8" stroke="#e01010" stroke-width="1.1" fill="none"/><text x="1190" y="256.6" transform="rotate(10.5 1190 251.6)" font-family="Liberation Sans, sans-serif" font-size="16" fill="#1a1a1a" text-anchor="middle">Top</text><path d="M1222.5 307L1211.4 311.2L1222.5 314.5L1234 311.2Z" fill="#efefef"/><path d="M1211.4 311.2L1222.5 314.5V329.4L1211.4 325.5Z" fill="#c8c8c8"/><path d="M1222.5 314.5L1234 311.2V325.5L1222.5 329.4Z" fill="#dfdfdf"/><path d="M1238 314.1H1252.2L1245 322.2Z" fill="#3a3a3a"/></svg>
<svg style="left:1230px;top:700px" width="38" height="45" viewBox="1230 700 38 45"><path d="M1239.2 730.8L1257.8 734.2" stroke="#8b1a1a" stroke-width="1.5"/><path d="M1251.8 731.6L1254.2 733.6L1252 735.6" fill="none" stroke="#8b1a1a" stroke-width="1.2"/><path d="M1238.8 730.6L1240.2 722L1242 713.8" stroke="#1f8a1f" stroke-width="1.6" fill="none"/><path d="M1239.4 718.5L1242.6 717.6" stroke="#1f8a1f" stroke-width="1.8"/><path d="M1238.4 728.6L1243.6 725.2" stroke="#22229a" stroke-width="3.4"/><circle cx="1241.2" cy="727" r="2.2" fill="#22229a"/><g fill="none" stroke="#000" stroke-width="1"><path d="M1244.2 707.2L1246.6 710.6L1249 707.2M1246.6 710.6V714.2"/><path d="M1245 718.8H1249.6L1245 724.4H1250"/><path d="M1261.2 728.4L1266 734.6M1266 728.4L1261.2 734.6"/></g></svg>
<svg style="left:17px;top:64px" width="24" height="24" viewBox="0 0 24 24"><defs><linearGradient id="g1" x1="0" y1="0" x2="1" y2="1"><stop offset="0" stop-color="#f4f4f3"/><stop offset="1" stop-color="#dcdcda"/></linearGradient><radialGradient id="g2" cx="50%" cy="50%" r="50%"><stop offset="0" stop-color="#ffffff" stop-opacity="1"/><stop offset="0.25" stop-color="#fff56a" stop-opacity="1"/><stop offset="0.7" stop-color="#f3e300" stop-opacity="0.85"/><stop offset="1" stop-color="#f3e300" stop-opacity="0"/></radialGradient></defs><rect x="3" y="23" width="18.5" height="1" fill="#8d8d8a" opacity=".55"/><rect x="3.5" y="2.5" width="17.5" height="20.5" fill="url(#g1)" stroke="#a9a9a6" stroke-width="1"/><rect x="4.5" y="3.5" width="15.5" height="18.5" fill="none" stroke="#fff" stroke-width="1" opacity=".8"/><circle cx="18.3" cy="6.4" r="5" fill="url(#g2)"/></svg>
<svg style="left:53px;top:64px" width="24" height="24" viewBox="0 0 24 24"><defs><linearGradient id="g3" x1="0" y1="0" x2="0" y2="1"><stop offset="0" stop-color="#8fb3dd"/><stop offset="1" stop-color="#5b8cc9"/></linearGradient><linearGradient id="g4" x1="0" y1="0" x2="0" y2="1"><stop offset="0" stop-color="#fdfdfd"/><stop offset="0.35" stop-color="#bdbdbb"/><stop offset="1" stop-color="#d9d9d7"/></linearGradient></defs><path d="M0.6 3.6L5.4 2.6V20L2.4 20.6Z" fill="#9b9b98" stroke="#7b7b79" stroke-width=".8"/><path d="M5.6 2.3H21.6V11H5.6Z" fill="url(#g4)" stroke="#9a9a97" stroke-width=".8"/><path d="M5.6 10.3H24L20.4 20.7H2.3Z" fill="url(#g3)" stroke="#3f6fae" stroke-width=".9"/><path d="M6.4 11.3H22.6" stroke="#a9c6e8" stroke-width=".8"/></svg>
<svg style="left:89px;top:64px" width="24" height="24" viewBox="0 0 24 24"><defs><linearGradient id="g5" x1="0" y1="0" x2="0" y2="1"><stop offset="0" stop-color="#f3f3f2"/><stop offset="1" stop-color="#d4d4d2"/></linearGradient><linearGradient id="g6" x1="0" y1="0" x2="0" y2="1"><stop offset="0" stop-color="#7fa9db"/><stop offset="1" stop-color="#2e63a8"/></linearGradient></defs><path d="M4.5 7H19.6L22.8 17.8H1.3Z" fill="url(#g5)" stroke="#aeaeab" stroke-width=".8"/><rect x="1.3" y="17.6" width="21.5" height="5.6" rx="1" fill="#b9b9b7" stroke="#9a9a98" stroke-width=".8"/><path d="M3.5 20.3H14" stroke="#9f9f9d" stroke-width="1.6"/><path d="M16 18.6V22.2M18 18.6V22.2M20 18.6V22.2" stroke="#cfcfcd" stroke-width=".8"/><path d="M2.4 7.8C3 3.8 6.2 1.6 9.6 2C12.8 2.4 14.4 4.8 14.4 8.6H18.2L12 15.8L5.6 8.6H9.6C9.6 6.2 8.2 5 6.4 5.2C4.6 5.4 3.2 6.4 2.4 7.8Z" fill="url(#g6)" stroke="#3b6fb3" stroke-width=".5"/></svg>
<svg style="left:125px;top:64px" width="24" height="24" viewBox="0 0 24 24"><defs><linearGradient id="g7" x1="0" y1="0" x2="0" y2="1"><stop offset="0" stop-color="#f0f0ef"/><stop offset="1" stop-color="#c9c9c7"/></linearGradient></defs><path d="M5 3H18.6V12.5H5Z" fill="#e6e6e4" stroke="#c4c4c2" stroke-width=".8"/><path d="M11.8 5.2L15 8.6H13.2V11.4H10.4V8.6H8.6Z" fill="#a9a9a7"/><rect x="1.3" y="11.6" width="21.4" height="10.8" rx="2.6" fill="url(#g7)" stroke="#a4a4a2" stroke-width=".9"/><path d="M3.8 15.2V16.4Q3.8 17.4 4.8 17.4H19.2Q20.2 17.4 20.2 16.4V15.2" fill="none" stroke="#a9a9a7" stroke-width=".9"/><path d="M2.4 22.6H21.6" stroke="#8f8f8d" stroke-width="1"/></svg>
<svg style="left:171px;top:64px" width="24" height="24" viewBox="0 0 24 24"><path d="M5.9 1.7L14 15M19.1 1.7L11 15" stroke="#b9b8b3" stroke-width="2.6" fill="none"/><path d="M5.9 1.7L14 15M19.1 1.7L11 15" stroke="#e4e3df" stroke-width="1.2" fill="none"/><ellipse cx="7" cy="19.6" rx="4.3" ry="3" transform="rotate(-35 7 19.6)" fill="none" stroke="#9c9b97" stroke-width="2.2"/><ellipse cx="18.4" cy="19.8" rx="4.3" ry="3" transform="rotate(35 18.4 19.8)" fill="none" stroke="#9c9b97" stroke-width="2.2"/><path d="M10.5 15.5L12.4 12.6L14.4 15.5L12.4 17.4Z" fill="#9c9b97"/></svg>
<svg style="left:207px;top:64px" width="24" height="24" viewBox="0 0 24 24"><rect x="1.8" y="2.4" width="15.4" height="16.8" fill="#e6e5e2" stroke="#c2c1bd" stroke-width=".9"/><path d="M4 7H11M4 9.5H11M4 12H9M4 14.5H9" stroke="#cfceca" stroke-width=".8"/><path d="M8.4 6.2H23.6V20L19.6 24H8.4Z" fill="#ececea" stroke="#bdbcb8" stroke-width=".9"/><rect x="11" y="9.5" width="10" height="7.2" fill="#d5d5d3"/><path d="M19.6 24V20H23.6Z" fill="#a9a8a5"/></svg>
<svg style="left:243px;top:64px" width="24" height="24" viewBox="0 0 24 24"><rect x="3.4" y="3.6" width="19" height="19.8" fill="#a9a8a4" stroke="#9b9a96" stroke-width=".8"/><rect x="5.6" y="5.8" width="14.6" height="15.4" fill="#e4e3df"/><rect x="8.2" y="1.6" width="9.4" height="4.4" rx="1" fill="#b2b1ad" stroke="#9b9a96" stroke-width=".6"/><path d="M20.2 17.2V21.2H16.2Z" fill="#aaa9a5"/><path d="M8 10H16M8 12.5H16M8 15H14" stroke="#d6d5d1" stroke-width=".9"/></svg>
<svg style="left:289px;top:64px" width="24" height="24" viewBox="0 0 24 24"><ellipse cx="11" cy="20.8" rx="8" ry="1.6" fill="#cfcdc8" opacity=".6"/><path d="M4 9.7L12.5 2.2V6.4C18 6.4 20.8 9.4 20.6 13.4C20.4 16.6 18 18.4 15.6 18.6C17.2 17 17.4 14.6 16 13.4C15 12.6 13.8 12.6 12.5 12.6V17.3Z" fill="#d6d4cf" stroke="#cbc9c4" stroke-width=".9"/></svg>
<svg style="left:343px;top:64px" width="24" height="24" viewBox="0 0 24 24"><ellipse cx="13" cy="20.8" rx="8" ry="1.6" fill="#cfcdc8" opacity=".6"/><path d="M20.9 9.7L12.4 2.2V6.4C6.9 6.4 4.1 9.4 4.3 13.4C4.5 16.6 6.9 18.4 9.3 18.6C7.7 17 7.5 14.6 8.9 13.4C9.9 12.6 11.1 12.6 12.4 12.6V17.3Z" fill="#d3d1cc" stroke="#c6c4bf" stroke-width=".9"/><path d="M13.2 7.4L19.4 9.9L13.2 15.6Z" fill="#c3c1bc"/></svg>
<svg style="left:410px;top:64px" width="24" height="24" viewBox="0 0 24 24"><path d="M3.2 10.2C3.6 5.6 7.4 2.6 11.8 2.8C14.2 2.9 16.2 3.8 17.6 5.2L21.7 2.6V11.6L13.2 10.4L15.8 7.6C14.6 6.6 13.2 6.2 11.8 6.3C9.2 6.5 7.4 8.2 7 10.6Z" fill="#a7a7a3" stroke="#9b9b97" stroke-width=".5"/><path d="M21.3 13C20.9 17.6 17.1 20.6 12.7 20.4C10.3 20.3 8.3 19.4 6.9 18L2.8 21.6V12.6L11.3 13.8L8.7 15.6C9.9 16.6 11.3 17 12.7 16.9C15.3 16.7 17.1 15 17.5 12.6Z" fill="#b3b3af" stroke="#a3a39f" stroke-width=".5"/></svg>
<svg style="left:456px;top:64px" width="24" height="24" viewBox="0 0 24 24"><path d="M1.7 2.2L3.1 18.7L7.4 15.4L12.6 24.4L15.9 22L10.7 13.5L15.9 11.6Z" fill="#7b7e79" stroke="#555753" stroke-width=".8" stroke-linejoin="round"/><path d="M13.6 5.6C14.4 3.6 16.4 2.6 18.8 2.9C21.6 3.2 23.4 5.2 23.2 7.8C23 10 21.6 11.2 20 12.2C18.8 13 18.6 14 18.6 16.2" fill="none" stroke="#204a87" stroke-width="3"/><path d="M13.6 5.6C14.4 3.6 16.4 2.6 18.8 2.9C21.6 3.2 23.4 5.2 23.2 7.8C23 10 21.6 11.2 20 12.2C18.8 13 18.6 14 18.6 16.2" fill="none" stroke="#4f86c9" stroke-width="1.5"/><circle cx="18.6" cy="21.2" r="1.9" fill="#4f86c9" stroke="#204a87" stroke-width=".9"/></svg>
<div style="left:160px;top:65px;width:1px;height:24px;background:#a8a6a1;"></div>
<div style="left:161px;top:65px;width:1px;height:24px;background:#fff;"></div>
<div style="left:279px;top:65px;width:1px;height:24px;background:#a8a6a1;"></div>
<div style="left:280px;top:65px;width:1px;height:24px;background:#fff;"></div>
<div style="left:398px;top:65px;width:1px;height:24px;background:#a8a6a1;"></div>
<div style="left:399px;top:65px;width:1px;height:24px;background:#fff;"></div>
<div style="left:445px;top:65px;width:1px;height:24px;background:#a8a6a1;"></div>
<div style="left:446px;top:65px;width:1px;height:24px;background:#fff;"></div>
<svg style="left:324px;top:74px" width="11" height="7" viewBox="0 0 11 7"><path d="M1 1H10L5.5 5.7Z" fill="#fff"/><path d="M0 0H9L4.5 4.7Z" fill="#6e6e6c"/></svg>
<svg style="left:378px;top:74px" width="11" height="7" viewBox="0 0 11 7"><path d="M1 1H10L5.5 5.7Z" fill="#fff"/><path d="M0 0H9L4.5 4.7Z" fill="#6e6e6c"/></svg>
<svg style="left:711px;top:64px" width="24" height="24" viewBox="0 0 24 24"><defs><linearGradient id="g8" x1="0.2" y1="0" x2="0.6" y2="1"><stop offset="0" stop-color="#f23030"/><stop offset="1" stop-color="#a80404"/></linearGradient></defs><circle cx="12" cy="12.8" r="10.8" fill="url(#g8)" stroke="#7a0505" stroke-width=".9"/></svg>
<svg style="left:747px;top:64px" width="24" height="24" viewBox="0 0 24 24"><defs><linearGradient id="g9" x1="0" y1="0" x2="0" y2="1"><stop offset="0" stop-color="#c3c1bc"/><stop offset="1" stop-color="#a9a7a2"/></linearGradient></defs><rect x="1.4" y="2.2" width="21.4" height="21.4" fill="url(#g9)" stroke="#908e89" stroke-width=".9"/></svg>
<svg style="left:783px;top:64px" width="24" height="24" viewBox="0 0 24 24"><defs><linearGradient id="g10" x1="0" y1="0" x2="0" y2="1"><stop offset="0" stop-color="#ffffff"/><stop offset="1" stop-color="#dededc"/></linearGradient></defs><path d="M1.8 23H21.6" stroke="#8e8e8b" stroke-width="1.2" opacity=".7"/><path d="M2.4 5.4H21V20.6Q21 22.4 19.4 22.4H3.6Q2 22.4 2 20.6Z" fill="url(#g10)" stroke="#aeaeab" stroke-width=".8"/><rect x="3.4" y="2.2" width="16.4" height="3.6" fill="#d9b51a" stroke="#a88a10" stroke-width=".6"/><path d="M5 2.2V5.6M7 2.2V5.6M9 2.2V5.6M11 2.2V5.6M13 2.2V5.6M15 2.2V5.6M17 2.2V5.6" stroke="#f6e27a" stroke-width=".7"/><path d="M4.6 8.4H17.6M4.6 11.2H11M4.6 14H10M4.6 16.8H9" stroke="#d3d3d1" stroke-width="1.3"/><path d="M8.4 18L10.8 14.4L21.6 8.6L23.4 11.2L12.8 17Z" fill="#e9a531" stroke="#a86a10" stroke-width=".6"/><path d="M8.4 18L10.8 14.4L12.8 17Z" fill="#e8d5a8"/><path d="M20.2 9.4L21.6 8.6Q22.8 8.2 23.4 9.4Q24 10.6 23.2 11.4L22 12Z" fill="#ef3535"/></svg>
<svg style="left:819px;top:64px" width="24" height="24" viewBox="0 0 24 24"><defs><linearGradient id="g9" x1="0" y1="0" x2="0" y2="1"><stop offset="0" stop-color="#c3c1bc"/><stop offset="1" stop-color="#a9a7a2"/></linearGradient></defs><path d="M1.2 2L23.2 12.8L1.2 23.8Z" fill="url(#g9)" stroke="#9b9994" stroke-width=".9"/></svg>
<div style="left:500px;top:63px;width:191px;height:1px;background:#fff;"></div>
<div style="left:500px;top:63px;width:1px;height:26px;background:#fff;"></div>
<div style="left:691px;top:63px;width:1px;height:27px;background:#000;"></div>
<div style="left:500px;top:89px;width:192px;height:1px;background:#000;"></div>
<div style="left:690px;top:64px;width:1px;height:25px;background:#9f9d9a;"></div>
<div style="left:501px;top:88px;width:190px;height:1px;background:#9f9d9a;"></div>
<div style="left:671px;top:67px;width:1px;height:19px;background:#9f9d9a;"></div>
<div style="left:672px;top:67px;width:1px;height:19px;background:#fff;"></div>
<svg style="left:676px;top:74px" width="10" height="6" viewBox="0 0 10 6"><path d="M0 0H9L4.5 4.9Z" fill="#000"/></svg>
<svg style="left:508px;top:68px" width="16" height="16" viewBox="0 0 16 16"><path d="M1 5.4L5.6 2.8L15.2 4.4V11.4L9.6 15L1 12.6Z" fill="#3a6fb5" stroke="#17365f" stroke-width=".7" stroke-linejoin="round"/><path d="M1 5.4L9.6 7.6V15" fill="none" stroke="#17365f" stroke-width=".6"/><path d="M9.6 7.6L15.2 4.4" stroke="#17365f" stroke-width=".6"/><path d="M1 5.4L5.6 2.8L15.2 4.4L9.6 7.6Z" fill="#5f93d1"/><path d="M1.2 3.2L3.8 0.4L9.4 6.2L9.6 9.2L6.8 8.8Z" fill="#d9c21a" stroke="#6b5d00" stroke-width=".5"/><path d="M6.8 8.8L9.4 6.2L9.6 9.2Z" fill="#fff" stroke="#444" stroke-width=".4"/><path d="M2.2 2.8L7.4 8.2M3.2 1.6L8.6 7.2" stroke="#9a8600" stroke-width=".5"/></svg>
<div class="t" style="left:527.6px;top:67px;font-size:15px;color:#000;font-weight:normal;letter-spacing:0.03px;">Part Design</div>
<svg style="left:17px;top:104px" width="24" height="24" viewBox="0 0 24 24"><defs><linearGradient id="g11" x1="0" y1="0" x2="1" y2="1"><stop offset="0" stop-color="#ffffff"/><stop offset="1" stop-color="#dfe2dc"/></linearGradient><linearGradient id="g12" x1="0" y1="0" x2="0" y2="1"><stop offset="0" stop-color="#3fe0e3"/><stop offset="1" stop-color="#0e9ea4"/></linearGradient></defs><path d="M3.4 2.4H20.4V23.4H7L3.4 19.8Z" fill="url(#g11)" stroke="#8b8d88" stroke-width=".9"/><path d="M3.4 19.8H7V23.4Z" fill="#9a9c97"/><path d="M12.5 13.5L18.6 19.6" stroke="#06858c" stroke-width="3.6" stroke-linecap="round"/><path d="M12.5 13.5L18.6 19.6" stroke="#24d6db" stroke-width="2" stroke-linecap="round"/><circle cx="10.2" cy="11.2" r="5.2" fill="url(#g12)" stroke="#06858c" stroke-width=".9"/></svg>
<svg style="left:53px;top:104px" width="24" height="24" viewBox="0 0 24 24"><defs><linearGradient id="g12" x1="0" y1="0" x2="0" y2="1"><stop offset="0" stop-color="#3fe0e3"/><stop offset="1" stop-color="#0e9ea4"/></linearGradient></defs><path d="M13.5 14.5L21 22" stroke="#06858c" stroke-width="4.6" stroke-linecap="square"/><path d="M13.5 14.5L21 22" stroke="#24d6db" stroke-width="2.8" stroke-linecap="square"/><circle cx="8.7" cy="9.7" r="7.6" fill="url(#g12)" stroke="#06858c" stroke-width="1"/><path d="M4 15.2L4.9 13L9.6 8.6L7.6 6.6L14.4 4.6L12.4 11.4L10.6 9.6L6 14.4Z" fill="#fff" stroke="#555" stroke-width=".7" stroke-linejoin="round"/></svg>
<svg style="left:89px;top:104px" width="24" height="24" viewBox="0 0 24 24"><defs><linearGradient id="g13" x1="0" y1="0" x2="0" y2="1"><stop offset="0" stop-color="#35e3e7"/><stop offset="1" stop-color="#13b5bb"/></linearGradient></defs><path d="M11 1.7L21.9 6.9V18.7L11 23.9L0.4 18.7V6.9Z" fill="url(#g13)" stroke="#06858c" stroke-width="1.1" stroke-linejoin="round"/><circle cx="11" cy="12.7" r="7.3" fill="none" stroke="#7a0000" stroke-width="3.4"/><circle cx="11" cy="12.7" r="7.3" fill="none" stroke="#d40000" stroke-width="2.2"/><path d="M5.8 7.6L16.2 17.8" stroke="#7a0000" stroke-width="3.4"/><path d="M5.8 7.6L16.2 17.8" stroke="#d40000" stroke-width="2.2"/></svg>
<svg style="left:154px;top:104px" width="24" height="24" viewBox="0 0 24 24"><path d="M11.8 2.2L23 7.1L23 18.7L11.8 23.6L0.9 18.7L0.9 7.1Z" fill="#e8e8e4"/><path d="M11.8 4.6L11.8 9.4" stroke="#06858c" stroke-width="1.8" stroke-linecap="round"/><ellipse cx="7.4" cy="18.4" rx="2" ry="1" transform="rotate(-20 7.4 18.4)" fill="#06858c"/><ellipse cx="16.2" cy="18.4" rx="2" ry="1" transform="rotate(20 16.2 18.4)" fill="#06858c"/><path d="M11.8 2.2L23 7.1" stroke="#06858c" stroke-width="2.5" stroke-linecap="round"/><path d="M23 7.1L23 18.7" stroke="#06858c" stroke-width="2.5" stroke-linecap="round"/><path d="M23 18.7L11.8 23.6" stroke="#06858c" stroke-width="2.5" stroke-linecap="round"/><path d="M11.8 23.6L0.9 18.7" stroke="#06858c" stroke-width="2.5" stroke-linecap="round"/><path d="M0.9 18.7L0.9 7.1" stroke="#06858c" stroke-width="2.5" stroke-linecap="round"/><path d="M0.9 7.1L11.8 2.2" stroke="#06858c" stroke-width="2.5" stroke-linecap="round"/><path d="M0.9 7.1L11.8 11.9" stroke="#06858c" stroke-width="2.5" stroke-linecap="round"/><path d="M23 7.1L11.8 11.9" stroke="#06858c" stroke-width="2.5" stroke-linecap="round"/><path d="M11.8 11.9L11.8 23.6" stroke="#06858c" stroke-width="2.5" stroke-linecap="round"/><path d="M11.8 2.2L23 7.1" stroke="#20c4ca" stroke-width="0.9" stroke-linecap="round"/><path d="M23 7.1L23 18.7" stroke="#20c4ca" stroke-width="0.9" stroke-linecap="round"/><path d="M23 18.7L11.8 23.6" stroke="#20c4ca" stroke-width="0.9" stroke-linecap="round"/><path d="M11.8 23.6L0.9 18.7" stroke="#20c4ca" stroke-width="0.9" stroke-linecap="round"/><path d="M0.9 18.7L0.9 7.1" stroke="#20c4ca" stroke-width="0.9" stroke-linecap="round"/><path d="M0.9 7.1L11.8 2.2" stroke="#20c4ca" stroke-width="0.9" stroke-linecap="round"/><path d="M0.9 7.1L11.8 11.9" stroke="#20c4ca" stroke-width="0.9" stroke-linecap="round"/><path d="M23 7.1L11.8 11.9" stroke="#20c4ca" stroke-width="0.9" stroke-linecap="round"/><path d="M11.8 11.9L11.8 23.6" stroke="#20c4ca" stroke-width="0.9" stroke-linecap="round"/></svg>
<svg style="left:200px;top:104px" width="24" height="24" viewBox="0 0 24 24"><defs><linearGradient id="g14" x1="0" y1="0" x2="0" y2="1"><stop offset="0" stop-color="#33e4e8"/><stop offset="1" stop-color="#14c3c9"/></linearGradient><linearGradient id="g15" x1="0" y1="0" x2="0" y2="1"><stop offset="0" stop-color="#19bcc2"/><stop offset="1" stop-color="#0a8f96"/></linearGradient></defs><path d="M2.4 6.4L9.4 2.4L23.4 2.4L23.4 17.0L17.4 22.6L2.4 22.6Z" fill="#ecece8"/><path d="M9.4 2.4L23.4 2.4L23.4 17.0L9.4 17.0Z" fill="none" stroke="#06858c" stroke-width="2.0" stroke-linejoin="round"/><path d="M9.4 2.4L23.4 2.4L23.4 17.0L9.4 17.0Z" fill="none" stroke="#20c4ca" stroke-width="0.7" stroke-linejoin="round"/><path d="M2.4 6.4L9.4 2.4" stroke="#06858c" stroke-width="2.5"/><path d="M2.4 6.4L9.4 2.4" stroke="#20c4ca" stroke-width="0.9"/><path d="M17.4 6.4L23.4 2.4" stroke="#06858c" stroke-width="2.5"/><path d="M17.4 6.4L23.4 2.4" stroke="#20c4ca" stroke-width="0.9"/><path d="M17.4 22.6L23.4 17.0" stroke="#06858c" stroke-width="2.5"/><path d="M17.4 22.6L23.4 17.0" stroke="#20c4ca" stroke-width="0.9"/><path d="M2.4 22.6L9.4 17.0" stroke="#06858c" stroke-width="2.5"/><path d="M2.4 22.6L9.4 17.0" stroke="#20c4ca" stroke-width="0.9"/><path d="M2.4 6.4L17.4 6.4L17.4 22.6L2.4 22.6Z" fill="none" stroke="#06858c" stroke-width="2.5" stroke-linejoin="round"/><path d="M2.4 6.4L17.4 6.4L17.4 22.6L2.4 22.6Z" fill="none" stroke="#20c4ca" stroke-width="0.9" stroke-linejoin="round"/><path d="M2.4 6.4L17.4 6.4L17.4 22.6L2.4 22.6Z" fill="url(#g14)" stroke="#06858c" stroke-width="1.1" stroke-linejoin="round"/></svg>
<svg style="left:236px;top:104px" width="24" height="24" viewBox="0 0 24 24"><defs><linearGradient id="g16" x1="0" y1="0" x2="0" y2="1"><stop offset="0" stop-color="#33e4e8"/><stop offset="1" stop-color="#14c3c9"/></linearGradient><linearGradient id="g17" x1="0" y1="0" x2="0" y2="1"><stop offset="0" stop-color="#19bcc2"/><stop offset="1" stop-color="#0a8f96"/></linearGradient></defs><path d="M2.4 6.4L9.4 2.4L23.4 2.4L23.4 17.0L17.4 22.6L2.4 22.6Z" fill="#ecece8"/><path d="M9.4 2.4L23.4 2.4L23.4 17.0L9.4 17.0Z" fill="none" stroke="#06858c" stroke-width="2.0" stroke-linejoin="round"/><path d="M9.4 2.4L23.4 2.4L23.4 17.0L9.4 17.0Z" fill="none" stroke="#20c4ca" stroke-width="0.7" stroke-linejoin="round"/><path d="M2.4 6.4L9.4 2.4" stroke="#06858c" stroke-width="2.5"/><path d="M2.4 6.4L9.4 2.4" stroke="#20c4ca" stroke-width="0.9"/><path d="M17.4 6.4L23.4 2.4" stroke="#06858c" stroke-width="2.5"/><path d="M17.4 6.4L23.4 2.4" stroke="#20c4ca" stroke-width="0.9"/><path d="M17.4 22.6L23.4 17.0" stroke="#06858c" stroke-width="2.5"/><path d="M17.4 22.6L23.4 17.0" stroke="#20c4ca" stroke-width="0.9"/><path d="M2.4 22.6L9.4 17.0" stroke="#06858c" stroke-width="2.5"/><path d="M2.4 22.6L9.4 17.0" stroke="#20c4ca" stroke-width="0.9"/><ellipse cx="13.6" cy="9.6" rx="1.5" ry="2" fill="none" stroke="#06858c" stroke-width="1"/><ellipse cx="8" cy="18.6" rx="1.8" ry=".9" transform="rotate(-35 8 18.6)" fill="#06858c"/><ellipse cx="14.6" cy="16.4" rx="1.6" ry=".8" fill="#06858c"/><path d="M2.4 6.4L17.4 6.4L17.4 22.6L2.4 22.6Z" fill="none" stroke="#06858c" stroke-width="2.5" stroke-linejoin="round"/><path d="M2.4 6.4L17.4 6.4L17.4 22.6L2.4 22.6Z" fill="none" stroke="#20c4ca" stroke-width="0.9" stroke-linejoin="round"/><path d="M2.4 6.4L9.4 2.4L23.4 2.4L17.4 6.4Z" fill="url(#g16)" stroke="#06858c" stroke-width="1.1" stroke-linejoin="round"/></svg>
<svg style="left:272px;top:104px" width="24" height="24" viewBox="0 0 24 24"><defs><linearGradient id="g18" x1="0" y1="0" x2="0" y2="1"><stop offset="0" stop-color="#33e4e8"/><stop offset="1" stop-color="#14c3c9"/></linearGradient><linearGradient id="g19" x1="0" y1="0" x2="0" y2="1"><stop offset="0" stop-color="#19bcc2"/><stop offset="1" stop-color="#0a8f96"/></linearGradient></defs><path d="M2.4 6.4L9.4 2.4L23.4 2.4L23.4 17.0L17.4 22.6L2.4 22.6Z" fill="#ecece8"/><path d="M9.4 2.4L23.4 2.4L23.4 17.0L9.4 17.0Z" fill="none" stroke="#06858c" stroke-width="2.0" stroke-linejoin="round"/><path d="M9.4 2.4L23.4 2.4L23.4 17.0L9.4 17.0Z" fill="none" stroke="#20c4ca" stroke-width="0.7" stroke-linejoin="round"/><path d="M2.4 6.4L9.4 2.4" stroke="#06858c" stroke-width="2.5"/><path d="M2.4 6.4L9.4 2.4" stroke="#20c4ca" stroke-width="0.9"/><path d="M17.4 6.4L23.4 2.4" stroke="#06858c" stroke-width="2.5"/><path d="M17.4 6.4L23.4 2.4" stroke="#20c4ca" stroke-width="0.9"/><path d="M17.4 22.6L23.4 17.0" stroke="#06858c" stroke-width="2.5"/><path d="M17.4 22.6L23.4 17.0" stroke="#20c4ca" stroke-width="0.9"/><path d="M2.4 22.6L9.4 17.0" stroke="#06858c" stroke-width="2.5"/><path d="M2.4 22.6L9.4 17.0" stroke="#20c4ca" stroke-width="0.9"/><ellipse cx="13.6" cy="9.6" rx="1.5" ry="2" fill="none" stroke="#06858c" stroke-width="1"/><ellipse cx="8" cy="18.6" rx="1.8" ry=".9" transform="rotate(-35 8 18.6)" fill="#06858c"/><ellipse cx="14.6" cy="16.4" rx="1.6" ry=".8" fill="#06858c"/><path d="M2.4 6.4L17.4 6.4L17.4 22.6L2.4 22.6Z" fill="none" stroke="#06858c" stroke-width="2.5" stroke-linejoin="round"/><path d="M2.4 6.4L17.4 6.4L17.4 22.6L2.4 22.6Z" fill="none" stroke="#20c4ca" stroke-width="0.9" stroke-linejoin="round"/><path d="M17.4 6.4L23.4 2.4L23.4 17.0L17.4 22.6Z" fill="url(#g19)" stroke="#06858c" stroke-width="1.1" stroke-linejoin="round"/></svg>
<svg style="left:319px;top:104px" width="24" height="24" viewBox="0 0 24 24"><defs><linearGradient id="g20" x1="0" y1="0" x2="0" y2="1"><stop offset="0" stop-color="#33e4e8"/><stop offset="1" stop-color="#14c3c9"/></linearGradient><linearGradient id="g21" x1="0" y1="0" x2="0" y2="1"><stop offset="0" stop-color="#19bcc2"/><stop offset="1" stop-color="#0a8f96"/></linearGradient></defs><path d="M2.4 6.4L9.4 2.4L23.4 2.4L23.4 17.0L17.4 22.6L2.4 22.6Z" fill="#ecece8"/><path d="M9.4 2.4L23.4 2.4L23.4 17.0L9.4 17.0Z" fill="none" stroke="#06858c" stroke-width="2.0" stroke-linejoin="round"/><path d="M9.4 2.4L23.4 2.4L23.4 17.0L9.4 17.0Z" fill="none" stroke="#20c4ca" stroke-width="0.7" stroke-linejoin="round"/><path d="M9.4 2.4L23.4 2.4L23.4 17.0L9.4 17.0Z" fill="url(#g20)" stroke="#06858c" stroke-width="1"/><ellipse cx="8" cy="18.6" rx="1.8" ry=".9" transform="rotate(-35 8 18.6)" fill="#06858c"/><ellipse cx="14.6" cy="16.4" rx="1.6" ry=".8" fill="#06858c"/><path d="M2.4 6.4L9.4 2.4" stroke="#06858c" stroke-width="2.5"/><path d="M2.4 6.4L9.4 2.4" stroke="#20c4ca" stroke-width="0.9"/><path d="M17.4 6.4L23.4 2.4" stroke="#06858c" stroke-width="2.5"/><path d="M17.4 6.4L23.4 2.4" stroke="#20c4ca" stroke-width="0.9"/><path d="M17.4 22.6L23.4 17.0" stroke="#06858c" stroke-width="2.5"/><path d="M17.4 22.6L23.4 17.0" stroke="#20c4ca" stroke-width="0.9"/><path d="M2.4 22.6L9.4 17.0" stroke="#06858c" stroke-width="2.5"/><path d="M2.4 22.6L9.4 17.0" stroke="#20c4ca" stroke-width="0.9"/><path d="M2.4 6.4L17.4 6.4L17.4 22.6L2.4 22.6Z" fill="none" stroke="#06858c" stroke-width="2.5" stroke-linejoin="round"/><path d="M2.4 6.4L17.4 6.4L17.4 22.6L2.4 22.6Z" fill="none" stroke="#20c4ca" stroke-width="0.9" stroke-linejoin="round"/></svg>
<svg style="left:355px;top:104px" width="24" height="24" viewBox="0 0 24 24"><defs><linearGradient id="g22" x1="0" y1="0" x2="0" y2="1"><stop offset="0" stop-color="#33e4e8"/><stop offset="1" stop-color="#14c3c9"/></linearGradient><linearGradient id="g23" x1="0" y1="0" x2="0" y2="1"><stop offset="0" stop-color="#19bcc2"/><stop offset="1" stop-color="#0a8f96"/></linearGradient></defs><path d="M2.4 6.4L9.4 2.4L23.4 2.4L23.4 17.0L17.4 22.6L2.4 22.6Z" fill="#ecece8"/><path d="M9.4 2.4L23.4 2.4L23.4 17.0L9.4 17.0Z" fill="none" stroke="#06858c" stroke-width="2.0" stroke-linejoin="round"/><path d="M9.4 2.4L23.4 2.4L23.4 17.0L9.4 17.0Z" fill="none" stroke="#20c4ca" stroke-width="0.7" stroke-linejoin="round"/><path d="M2.4 22.6L9.4 17.0L23.4 17.0L17.4 22.6Z" fill="url(#g22)" stroke="#06858c" stroke-width="1"/><path d="M2.4 6.4L9.4 2.4" stroke="#06858c" stroke-width="2.5"/><path d="M2.4 6.4L9.4 2.4" stroke="#20c4ca" stroke-width="0.9"/><path d="M17.4 6.4L23.4 2.4" stroke="#06858c" stroke-width="2.5"/><path d="M17.4 6.4L23.4 2.4" stroke="#20c4ca" stroke-width="0.9"/><path d="M17.4 22.6L23.4 17.0" stroke="#06858c" stroke-width="2.5"/><path d="M17.4 22.6L23.4 17.0" stroke="#20c4ca" stroke-width="0.9"/><path d="M2.4 22.6L9.4 17.0" stroke="#06858c" stroke-width="2.5"/><path d="M2.4 22.6L9.4 17.0" stroke="#20c4ca" stroke-width="0.9"/><path d="M2.4 6.4L17.4 6.4L17.4 22.6L2.4 22.6Z" fill="none" stroke="#06858c" stroke-width="2.5" stroke-linejoin="round"/><path d="M2.4 6.4L17.4 6.4L17.4 22.6L2.4 22.6Z" fill="none" stroke="#20c4ca" stroke-width="0.9" stroke-linejoin="round"/></svg>
<svg style="left:391px;top:104px" width="24" height="24" viewBox="0 0 24 24"><defs><linearGradient id="g24" x1="0" y1="0" x2="0" y2="1"><stop offset="0" stop-color="#33e4e8"/><stop offset="1" stop-color="#14c3c9"/></linearGradient><linearGradient id="g25" x1="0" y1="0" x2="0" y2="1"><stop offset="0" stop-color="#19bcc2"/><stop offset="1" stop-color="#0a8f96"/></linearGradient></defs><path d="M2.4 6.4L9.4 2.4L23.4 2.4L23.4 17.0L17.4 22.6L2.4 22.6Z" fill="#ecece8"/><path d="M9.4 2.4L23.4 2.4L23.4 17.0L9.4 17.0Z" fill="none" stroke="#06858c" stroke-width="2.0" stroke-linejoin="round"/><path d="M9.4 2.4L23.4 2.4L23.4 17.0L9.4 17.0Z" fill="none" stroke="#20c4ca" stroke-width="0.7" stroke-linejoin="round"/><path d="M2.4 6.4L9.4 2.4L9.4 17.0L2.4 22.6Z" fill="url(#g25)" stroke="#06858c" stroke-width="1"/><path d="M2.4 6.4L9.4 2.4" stroke="#06858c" stroke-width="2.5"/><path d="M2.4 6.4L9.4 2.4" stroke="#20c4ca" stroke-width="0.9"/><path d="M17.4 6.4L23.4 2.4" stroke="#06858c" stroke-width="2.5"/><path d="M17.4 6.4L23.4 2.4" stroke="#20c4ca" stroke-width="0.9"/><path d="M17.4 22.6L23.4 17.0" stroke="#06858c" stroke-width="2.5"/><path d="M17.4 22.6L23.4 17.0" stroke="#20c4ca" stroke-width="0.9"/><path d="M2.4 22.6L9.4 17.0" stroke="#06858c" stroke-width="2.5"/><path d="M2.4 22.6L9.4 17.0" stroke="#20c4ca" stroke-width="0.9"/><path d="M2.4 6.4L17.4 6.4L17.4 22.6L2.4 22.6Z" fill="none" stroke="#06858c" stroke-width="2.5" stroke-linejoin="round"/><path d="M2.4 6.4L17.4 6.4L17.4 22.6L2.4 22.6Z" fill="none" stroke="#20c4ca" stroke-width="0.9" stroke-linejoin="round"/></svg>
<svg style="left:438px;top:104px" width="24" height="24" viewBox="0 0 24 24"><defs><linearGradient id="g26" x1="0" y1="0" x2="0" y2="1"><stop offset="0" stop-color="#35e3e7"/><stop offset="1" stop-color="#12aeb4"/></linearGradient></defs><path d="M1.8 6.6L7.4 1.7L21.2 14.6V20.2L15.4 23.4L15.2 19.4Z" fill="url(#g26)" stroke="#06858c" stroke-width=".9" stroke-linejoin="round"/><path d="M15.2 19.4L21.2 14.6" stroke="#06858c" stroke-width=".8"/><path d="M7 6L8.8 4.4M9.4 8.2L11.2 6.6M11.8 10.4L13.6 8.8M14.2 12.6L16 11M16.6 14.8L18.4 13.2" stroke="#06858c" stroke-width="1"/></svg>
<svg style="left:488px;top:104px" width="24" height="24" viewBox="0 0 24 24"><path d="M3.4 8.6L10.8 2.4L15 4.4V9L20.6 11.6V17.4L13.2 23.2L3.4 19.4Z" fill="#e6cf1e" stroke="#6b5d00" stroke-width="1" stroke-linejoin="round"/><path d="M3.4 8.6L10.8 2.4L15 4.4L7.6 10.6Z" fill="#fbec5d" stroke="#6b5d00" stroke-width=".8"/><path d="M7.6 10.6V15.6L3.4 13.8M7.6 15.6L13.2 17.6L20.6 11.6M7.6 15.6L7.6 10.6L15 4.4" fill="none" stroke="#6b5d00" stroke-width=".8"/><path d="M9 14.2L15 9L20.6 11.6L13.2 17.6Z" fill="#fbec5d" stroke="#6b5d00" stroke-width=".8"/><path d="M13.2 17.6V23.2M3.4 13.8L3.4 19.4" stroke="#6b5d00" stroke-width=".8"/><path d="M13.2 17.6L20.6 11.6V17.4L13.2 23.2Z" fill="#cdb40c" stroke="#6b5d00" stroke-width=".8"/><path d="M7.6 10.6L15 4.4V9L9 14.2L7.6 15.6Z" fill="#d6bd10" stroke="#6b5d00" stroke-width=".8"/></svg>
<svg style="left:524px;top:104px" width="24" height="24" viewBox="0 0 24 24"><defs><linearGradient id="g27" x1="0" y1="0" x2="0" y2="1"><stop offset="0" stop-color="#8fb3dd"/><stop offset="1" stop-color="#6d9bd3"/></linearGradient></defs><path d="M1.6 3.6Q1.6 2.8 2.6 2.8H8.6Q9.6 2.8 9.8 3.8L10.2 5.4H18.4Q19.4 5.4 19.4 6.4V9H1.6Z" fill="#9d9d9a" stroke="#8a8a87" stroke-width=".6"/><rect x="2.2" y="8.2" width="19.4" height="12.6" rx="1" fill="url(#g27)" stroke="#4f82c4" stroke-width=".9"/><path d="M3.2 9.4H20.6" stroke="#b6cfee" stroke-width=".8"/></svg>
<svg style="left:122px;top:114px" width="10" height="6" viewBox="0 0 10 6"><path d="M0 0H9L4.5 4.9Z" fill="#000"/></svg>
<div style="left:142px;top:105px;width:1px;height:24px;background:#a8a6a1;"></div>
<div style="left:143px;top:105px;width:1px;height:24px;background:#fff;"></div>
<div style="left:189px;top:105px;width:1px;height:24px;background:#a8a6a1;"></div>
<div style="left:190px;top:105px;width:1px;height:24px;background:#fff;"></div>
<div style="left:308px;top:105px;width:1px;height:24px;background:#a8a6a1;"></div>
<div style="left:309px;top:105px;width:1px;height:24px;background:#fff;"></div>
<div style="left:427px;top:105px;width:1px;height:24px;background:#a8a6a1;"></div>
<div style="left:428px;top:105px;width:1px;height:24px;background:#fff;"></div>
<svg style="left:17px;top:144px" width="24" height="24" viewBox="0 0 24 24"><path d="M3.4 8L10.4 2.6L16.2 5.2V10.2L21.2 12.4V18L14.2 23.2L3.4 18.6Z" fill="#4d82c4" stroke="#14284a" stroke-width="0.8999999999999999" stroke-linejoin="round"/><path d="M3.4 8L10.4 2.6L16.2 5.2L9.4 10.4Z" fill="#7ba7d9" stroke="#14284a" stroke-width="0.6" stroke-linejoin="round"/><path d="M9.4 10.4L16.2 5.2V10.2L10 14.4V14.4L9.4 15Z" fill="#2f64a8" stroke="#14284a" stroke-width="0.6" stroke-linejoin="round"/><path d="M9.4 15L16.2 10.2L21.2 12.4L14.2 17.6Z" fill="#7ba7d9" stroke="#14284a" stroke-width="0.6" stroke-linejoin="round"/><path d="M14.2 17.6L21.2 12.4V18L14.2 23.2Z" fill="#2f64a8" stroke="#14284a" stroke-width="0.6" stroke-linejoin="round"/><path d="M9.4 10.4V15L14.2 17.6V23.2" fill="none" stroke="#14284a" stroke-width="0.6"/></svg>
<svg style="left:53px;top:144px" width="24" height="24" viewBox="0 0 24 24"><defs><linearGradient id="g28" x1="0" y1="0" x2="1" y2="1"><stop offset="0" stop-color="#ffffff"/><stop offset="1" stop-color="#e1e1df"/></linearGradient></defs><path d="M2.4 2H21.6V20L17.8 23.8H2.4Z" fill="url(#g28)" stroke="#7f7f7c" stroke-width=".9"/><path d="M17.8 23.8V20H21.6Z" fill="#b5b5b2" stroke="#7f7f7c" stroke-width=".6"/><rect x="4.6" y="11.4" width="10" height="9.4" fill="none" stroke="#e00000" stroke-width="1.3"/><circle cx="15.2" cy="10.2" r="5" fill="none" stroke="#e00000" stroke-width="1.3"/></svg>
<svg style="left:89px;top:144px" width="24" height="24" viewBox="0 0 24 24"><path d="M9.2 2.4H14.8V9.6H18.8L12 16.2L5.2 9.6H9.2Z" fill="#a5a5a2" stroke="#999996" stroke-width=".6"/><path d="M2 13.8H7.4V15.8H4V21.2H20.2V15.8H16.6V13.8H22.2V23.2H2Z" fill="#a9a9a6" stroke="#9c9c99" stroke-width=".5"/><path d="M3 14.8H6.6V16.8H5V20.2H19.2V16.8H17.6V14.8H21.2V22.2H3Z" fill="none" stroke="#e9e8e4" stroke-width=".9"/></svg>
<svg style="left:125px;top:144px" width="24" height="24" viewBox="0 0 24 24"><path d="M5.3 4.9L14.2 1.9L23 6.1L14.8 8.4Z" fill="#7ba7d9" stroke="#14284a" stroke-width=".7" stroke-linejoin="round"/><path d="M14.8 8.4L23 6.1V19.7L14.8 23.8Z" fill="#2a5a9a" stroke="#14284a" stroke-width=".7" stroke-linejoin="round"/><path d="M5.3 4.9L14.8 8.4V23.8L5.3 19Z" fill="#4d82c4" stroke="#14284a" stroke-width=".7" stroke-linejoin="round"/><path d="M1.2 4.9L11.2 7.8V21.4L9.4 23.2L1.2 19.1Z" fill="#f2f2f0" stroke="#777" stroke-width=".7" stroke-linejoin="round"/><path d="M9.4 23.2V21.2L11.2 21.4Z" fill="#999"/><path d="M3 12L7 13.4V18.6L3 17.2Z" fill="none" stroke="#e00000" stroke-width="1"/><ellipse cx="7.4" cy="11.8" rx="2.6" ry="3.2" fill="none" stroke="#e00000" stroke-width="1"/></svg>
<svg style="left:171px;top:144px" width="24" height="24" viewBox="0 0 24 24"><circle cx="13" cy="13.2" r="3.6" fill="#3f74b8" stroke="#204a87" stroke-width=".8"/><circle cx="13" cy="13.2" r="2" fill="#ef1010"/></svg>
<svg style="left:207px;top:144px" width="24" height="24" viewBox="0 0 24 24"><path d="M4 21.8L22 4" stroke="#0b1a30" stroke-width="3.2"/><path d="M4 21.8L22 4" stroke="#3f74b8" stroke-width="1.8"/><circle cx="4" cy="21.8" r="2.1" fill="#ef1010" stroke="#8a0000" stroke-width=".7"/><circle cx="22" cy="4" r="2.1" fill="#ef1010" stroke="#8a0000" stroke-width=".7"/></svg>
<svg style="left:243px;top:144px" width="24" height="24" viewBox="0 0 24 24"><path d="M14.5 4L22.1 11.4" stroke="#0b1a30" stroke-width="3.2"/><path d="M14.5 4L22.1 11.4" stroke="#3f74b8" stroke-width="1.8"/><path d="M22.1 11.4L11.4 21.8" stroke="#0b1a30" stroke-width="3.2"/><path d="M22.1 11.4L11.4 21.8" stroke="#3f74b8" stroke-width="1.8"/><path d="M11.4 21.8L3.9 14.3" stroke="#0b1a30" stroke-width="3.2"/><path d="M11.4 21.8L3.9 14.3" stroke="#3f74b8" stroke-width="1.8"/><path d="M3.9 14.3L14.5 4" stroke="#0b1a30" stroke-width="3.2"/><path d="M3.9 14.3L14.5 4" stroke="#3f74b8" stroke-width="1.8"/><circle cx="14.5" cy="4" r="2.1" fill="#ef1010" stroke="#8a0000" stroke-width=".7"/><circle cx="22.1" cy="11.4" r="2.1" fill="#ef1010" stroke="#8a0000" stroke-width=".7"/><circle cx="11.4" cy="21.8" r="2.1" fill="#ef1010" stroke="#8a0000" stroke-width=".7"/><circle cx="3.9" cy="14.3" r="2.1" fill="#ef1010" stroke="#8a0000" stroke-width=".7"/></svg>
<svg style="left:279px;top:144px" width="24" height="24" viewBox="0 0 24 24"><path d="M11.5 14.3L11.5 4" stroke="#0b1a30" stroke-width="3.2"/><path d="M11.5 14.3L11.5 4" stroke="#3f74b8" stroke-width="1.8"/><path d="M11.5 14.3L21.9 14.3" stroke="#0b1a30" stroke-width="3.2"/><path d="M11.5 14.3L21.9 14.3" stroke="#3f74b8" stroke-width="1.8"/><path d="M11.5 14.3L3.8 21.8" stroke="#0b1a30" stroke-width="3.2"/><path d="M11.5 14.3L3.8 21.8" stroke="#3f74b8" stroke-width="1.8"/><circle cx="11.5" cy="4" r="2.1" fill="#ef1010" stroke="#8a0000" stroke-width=".7"/><circle cx="21.9" cy="14.3" r="2.1" fill="#ef1010" stroke="#8a0000" stroke-width=".7"/><circle cx="3.8" cy="21.8" r="2.1" fill="#ef1010" stroke="#8a0000" stroke-width=".7"/><circle cx="11.5" cy="14.3" r="2.1" fill="#ef1010" stroke="#8a0000" stroke-width=".7"/></svg>
<svg style="left:315px;top:144px" width="24" height="24" viewBox="0 0 24 24"><defs><radialGradient id="g29" cx="55%" cy="65%" r="65%"><stop offset="0" stop-color="#2f62a5"/><stop offset="1" stop-color="#7aa5da"/></radialGradient></defs><path d="M3 3.8C5.6 3 8.4 5.6 11.4 4.6C14.4 3.6 17.4 1.8 22 3C23.4 5.6 22.8 8.4 20.4 10.8C18 13.2 17.4 15.4 19 21.4C17.6 24 14.6 22.6 12.2 21C9 19.4 5.2 19.8 2.6 17.4C2.2 12.8 2 8.2 3 3.8Z" fill="url(#g29)" stroke="#17365f" stroke-width=".9"/><circle cx="21.8" cy="4" r="2.1" fill="#ef1010" stroke="#8a0000" stroke-width=".7"/><circle cx="3.8" cy="11.4" r="2.1" fill="#ef1010" stroke="#8a0000" stroke-width=".7"/><circle cx="18.8" cy="21.8" r="2.1" fill="#ef1010" stroke="#8a0000" stroke-width=".7"/></svg>
<svg style="left:352px;top:144px" width="24" height="24" viewBox="0 0 24 24"><defs><linearGradient id="g30" x1="0.8" y1="0" x2="0.2" y2="1"><stop offset="0" stop-color="#fcb260"/><stop offset="1" stop-color="#f57900"/></linearGradient></defs><path d="M5.2 4.4C6.4 3.4 8 3.6 9.4 3.4C10 2.4 11 2 12.1 2C13.2 2 14.6 2.4 15.4 3.4C16.8 3.6 18 3.4 18.8 4.4C19.6 5.4 19.2 6.4 19.2 7.3C18.6 9.4 18.2 11 18 13.2C18 15 17.6 17 17.1 18.8C16.4 21 14 23.7 11.8 23.7C9.8 23.7 7.4 21 6.7 18.8C6.2 17 5.8 15 5.8 13.2C5.6 11 5.2 9.4 4.7 7.3C4.6 6.4 4.4 5.4 5.2 4.4Z" fill="url(#g30)" stroke="#241c14" stroke-width="1.15"/><path d="M4.8 7.2C2.6 9 1 10.8 1.1 12.8C1 14.8 1.2 16.6 1.9 17.7C3.6 17 5 15.4 5.9 13.2Z" fill="#f57c12" stroke="#241c14" stroke-width="1.15" stroke-linejoin="round"/><path d="M19.1 7.2C21.3 9 22.9 10.8 22.8 12.8C22.9 14.8 22.7 16.6 22 17.7C20.3 17 18.9 15.4 18 13.2Z" fill="#f9a65a" stroke="#241c14" stroke-width="1.15" stroke-linejoin="round"/><path d="M8.1 12.8C8.1 10.8 9.8 10.4 11.4 11.2C12.6 9.8 16.7 9.8 16.7 12.4C16.7 15 13.6 15.4 12.2 14.4C10.6 15.4 8.1 14.8 8.1 12.8Z" fill="#fff"/><ellipse cx="12.4" cy="12.9" rx="2.5" ry="1.1" fill="#17171f"/><path d="M10 20.5H14M12 20.5V23" stroke="#2b2118" stroke-width=".8" fill="none"/></svg>
<div style="left:160px;top:145px;width:1px;height:24px;background:#a8a6a1;"></div>
<div style="left:161px;top:145px;width:1px;height:24px;background:#fff;"></div>
<svg style="left:401px;top:144px" width="24" height="24" viewBox="0 0 24 24"><defs><linearGradient id="g31" x1="0" y1="0" x2="1" y2="0"><stop offset="0" stop-color="#fdf07a"/><stop offset="1" stop-color="#d8bf10"/></linearGradient></defs><path d="M1.6 18.5L12.1 14.2L22.7 18.5L12.1 23.4Z" fill="none" stroke="#2e3436" stroke-width="1"/><path d="M5.4 18.5L12.1 15.9L18.9 18.5L12.1 21.4Z" fill="none" stroke="#555753" stroke-width=".8"/><path d="M1.4 7.8L12.1 2.9L22.4 5.7V11.4L12.1 17.1L1.4 13.7Z" fill="#edd400" stroke="#3c3200" stroke-width="1" stroke-linejoin="round"/><path d="M1.4 7.8L12.1 2.9L22.4 5.7L12.1 10.8Z" fill="#fce94f" stroke="#3c3200" stroke-width=".8" stroke-linejoin="round"/><path d="M12.1 10.8L22.4 5.7V11.4L12.1 17.1Z" fill="url(#g31)" stroke="#3c3200" stroke-width=".8" stroke-linejoin="round"/></svg>
<svg style="left:437px;top:144px" width="24" height="24" viewBox="0 0 24 24"><defs><linearGradient id="g32" x1="0" y1="0" x2="1" y2="1"><stop offset="0" stop-color="#fce94f"/><stop offset="0.5" stop-color="#edd400"/><stop offset="1" stop-color="#c4a000"/></linearGradient></defs><path d="M1 20.8L7 16.4" stroke="#e01010" stroke-width="2"/><path d="M17 9L22.8 4.7" stroke="#e01010" stroke-width="2"/><path d="M1.3 8.7L13.8 3.4C18.6 4.6 21.8 8.4 22.8 15.6L13.4 22.8L7 20.8C7.4 17.4 6.6 15.4 4.4 14Z" fill="url(#g32)" stroke="#3c3200" stroke-width="1" stroke-linejoin="round"/><path d="M1.3 8.7C7.6 9.2 12.4 14 13.4 22.8M4.4 14C7 14.6 8.6 17 8.8 21.4" fill="none" stroke="#3c3200" stroke-width=".8"/></svg>
<svg style="left:473px;top:144px" width="24" height="24" viewBox="0 0 24 24"><defs><linearGradient id="g33" x1="0" y1="0" x2="0" y2="1"><stop offset="0" stop-color="#f3df3a"/><stop offset="1" stop-color="#c8ac00"/></linearGradient></defs><path d="M5.4 11.6L10.1 5.9L20.4 8.4L10.9 12.8Z" fill="#fce94f" stroke="#a40000" stroke-width=".5" stroke-linejoin="round"/><path d="M10.9 12.8L20.4 8.4L20.7 21.8L10.6 20.4Z" fill="url(#g33)" stroke="#a40000" stroke-width=".5" stroke-linejoin="round"/><path d="M10.9 12.8L20.4 8.4" stroke="#300" stroke-width=".7" stroke-dasharray="1.6 1" opacity=".7"/><path d="M4 12.4L10 13.4L9.8 20L4.2 19Z" fill="#c8ac00" stroke="#a40000" stroke-width="2.4" stroke-linejoin="miter"/><path d="M4 12.4L10 13.4L9.8 20L4.2 19Z" fill="none" stroke="#ef2020" stroke-width="1.4" stroke-linejoin="miter"/><path d="M9.6 5L21.6 7.2L21.4 22.4" fill="none" stroke="#a40000" stroke-width="2.6" stroke-linejoin="miter"/><path d="M9.6 5L21.6 7.2L21.4 22.4" fill="none" stroke="#ef2020" stroke-width="1.6" stroke-linejoin="miter"/></svg>
<svg style="left:509px;top:144px" width="24" height="24" viewBox="0 0 24 24"><defs><linearGradient id="g34" x1="0" y1="0" x2="1" y2="1"><stop offset="0" stop-color="#e8d020"/><stop offset="1" stop-color="#b89c00"/></linearGradient></defs><g transform="translate(0 0)"><path d="M8.9 15.3C13 13.6 16 11 17.2 7.2L22.2 16.2C20.4 18.6 17 20.4 13.3 21.4L8.6 22.5Z" fill="url(#g34)" stroke="#2a0000" stroke-width=".6" stroke-linejoin="round"/><path d="M4.5 12.8C6.6 10.6 7.8 8 8.1 4.8L17.2 7C16 11 13 13.6 8.9 15.3Z" fill="#fce94f" stroke="#2a0000" stroke-width=".6" stroke-linejoin="round"/><path d="M10.6 18.6L13.4 17.6M15.4 13.4L16.8 11.6" stroke="#ef2020" stroke-width="1.5" opacity=".6"/><path d="M1.9 14L8.3 16L8.1 22.4L1.9 20Z" fill="#b89c00" stroke="#a40000" stroke-width="2.4" stroke-linejoin="miter"/><path d="M1.9 14L8.3 16L8.1 22.4L1.9 20Z" fill="none" stroke="#ef2020" stroke-width="1.4" stroke-linejoin="miter"/><path d="M2.6 18.2H6V20.4L2.6 19.6Z" fill="#a40000"/><path d="M7.5 3.2L17.8 6L22.6 15.8" fill="none" stroke="#a40000" stroke-width="2.6" stroke-linejoin="round"/><path d="M7.5 3.2L17.8 6L22.6 15.8" fill="none" stroke="#ef2020" stroke-width="1.6" stroke-linejoin="round"/><ellipse cx="21.6" cy="3.7" rx="1.5" ry="1.9" transform="rotate(20 21.6 3.7)" fill="#ef2020" stroke="#a40000" stroke-width=".9"/></g></svg>
<svg style="left:545px;top:144px" width="24" height="24" viewBox="0 0 24 24"><defs><linearGradient id="g35" x1="0" y1="0" x2="1" y2="1"><stop offset="0" stop-color="#fce94f"/><stop offset="1" stop-color="#f0dc28"/></linearGradient></defs><g transform="translate(0 0)"><path d="M1.6 6.6L10.6 3.5L20.8 5.1L12.8 7.9Z" fill="#fce94f" stroke="#3c3200" stroke-width=".8" stroke-linejoin="round"/><path d="M1.6 6.6L12.8 7.9V21.8L1.8 20.3Z" fill="url(#g35)" stroke="#3c3200" stroke-width=".8" stroke-linejoin="round"/><path d="M12.8 7.9L20.8 5.1L20.6 18.4L12.8 21.8Z" fill="#c9ac00" stroke="#3c3200" stroke-width=".8" stroke-linejoin="round"/><path d="M12.8 7.9V21.8M1.8 20.3L12.8 21.8L20.2 18.4" fill="none" stroke="#a40000" stroke-width="2.2"/><path d="M12.8 7.9V21.8M1.8 20.3L12.8 21.8L20.2 18.4" fill="none" stroke="#ef2020" stroke-width="1.2"/><circle cx="12.8" cy="7.9" r="1.9" fill="#ef2020" stroke="#a40000" stroke-width=".7"/><circle cx="1.9" cy="20.3" r="1.9" fill="#ef2020" stroke="#a40000" stroke-width=".7"/><circle cx="12.8" cy="21.8" r="1.9" fill="#ef2020" stroke="#a40000" stroke-width=".7"/><circle cx="20.2" cy="18.4" r="1.9" fill="#ef2020" stroke="#a40000" stroke-width=".7"/></g></svg>
<svg style="left:609px;top:144px" width="24" height="24" viewBox="0 0 24 24"><defs><linearGradient id="g36" x1="0" y1="0" x2="0" y2="1"><stop offset="0" stop-color="#8db4e2"/><stop offset="1" stop-color="#4f86c6"/></linearGradient></defs><path d="M2 12.8L13.1 4L23.8 7.4V12.8L12.7 22.8L2 19.5Z" fill="#3f74b8" stroke="#0b1a30" stroke-width="1" stroke-linejoin="round"/><path d="M2 12.8L13.1 4L23.8 7.4L12.7 16.8Z" fill="#729fcf" stroke="#0b1a30" stroke-width=".8" stroke-linejoin="round"/><path d="M2 12.8L12.7 16.8V22.8L2 19.5Z" fill="url(#g36)" stroke="#0b1a30" stroke-width=".8" stroke-linejoin="round"/><path d="M7.8 11.6L13.6 6.6L19.4 8.4L13.2 13.6Z" fill="#cc0000" stroke="#0b1a30" stroke-width=".8" stroke-linejoin="round"/><path d="M7.8 11.6L13.6 6.6L14 10L13.2 13.6Z" fill="#ef2929"/><path d="M13.6 6.6L14 10L19.4 8.4" fill="none" stroke="#7a0000" stroke-width=".6"/></svg>
<svg style="left:645px;top:144px" width="24" height="24" viewBox="0 0 24 24"><defs><linearGradient id="g37" x1="0" y1="0" x2="1" y2="0"><stop offset="0" stop-color="#ef2929"/><stop offset="1" stop-color="#a40000"/></linearGradient></defs><path d="M16.7 5.4L24 6V23.4L16.7 23.5Z" fill="#204a87" stroke="#0b1a30" stroke-width=".9" stroke-linejoin="round"/><path d="M2.2 2L16.7 5.4V23.5L2.2 20.1Z" fill="#5f93d1" stroke="#0b1a30" stroke-width="1" stroke-linejoin="round"/><path d="M2.2 2L10 1.6L24 6L16.7 5.4Z" fill="#729fcf" stroke="#0b1a30" stroke-width=".7" stroke-linejoin="round"/><ellipse cx="9.3" cy="12.8" rx="5.6" ry="6.8" fill="url(#g37)" stroke="#0b1a30" stroke-width=".9"/><path d="M12.6 8.2C14.6 10.4 14.6 15.6 12.6 17.8C13.4 15 13.4 11 12.6 8.2Z" fill="#f6f6f6"/></svg>
<svg style="left:681px;top:144px" width="24" height="24" viewBox="0 0 24 24"><defs><linearGradient id="g38" x1="0" y1="0" x2="1" y2="1"><stop offset="0" stop-color="#86b4e8"/><stop offset="1" stop-color="#3f74b8"/></linearGradient><linearGradient id="g39" x1="0" y1="0" x2="1" y2="1"><stop offset="0" stop-color="#f03030"/><stop offset="1" stop-color="#b00808"/></linearGradient></defs><path d="M2.2 20.3L7 17" stroke="#e01010" stroke-width="2"/><path d="M20.8 6.6L23.7 4.7" stroke="#e01010" stroke-width="2"/><path d="M11.4 4.4C13.6 2.8 17 3 19.2 5C22 7.8 24 11.6 24.3 15.4L22 16.6L16.6 18.4C16.2 13.6 14 9.8 10.2 7.7Z" fill="url(#g39)" stroke="#3a0a0a" stroke-width=".7" stroke-linejoin="round"/><path d="M13.2 3.2C18.2 2.6 23.6 8.2 24.6 15" fill="none" stroke="#17365f" stroke-width="1.5"/><path d="M14.6 5.4C18 7.4 20.4 11.4 20.8 16.6" fill="none" stroke="#8a0000" stroke-width=".7"/><path d="M2.2 8.7C3.6 7.8 4.8 7.4 6 7.3C7.6 7 9.2 7.2 10.5 7.6C12.4 8.6 13.6 10.4 14.3 12.6C15.4 14.6 16.6 16.4 17.1 18.1L16.8 20.6L14 22.8L9.9 21.4L8.3 19.2C8.3 18 8 17 7.7 16.4C7 15.2 6.2 14.6 5.5 14.2L3.3 13.7L2.5 10.9Z" fill="url(#g38)" stroke="#0b1a30" stroke-width=".9" stroke-linejoin="round"/><path d="M3.4 10.6C8 9.8 12.4 13.6 13.2 22M5.4 8C10.4 8 14.6 12.6 15.6 21.4" fill="none" stroke="#0b1a30" stroke-width=".7"/></svg>
<svg style="left:717px;top:144px" width="24" height="24" viewBox="0 0 24 24"><defs><linearGradient id="g40" x1="0" y1="0" x2="0" y2="1"><stop offset="0" stop-color="#e61818"/><stop offset="1" stop-color="#a80000"/></linearGradient></defs><path d="M5.4 11.6L10.1 5.9L20.4 8.4L10.9 12.8Z" fill="#f42a2a" stroke="#2a5a9a" stroke-width=".5" stroke-linejoin="round"/><path d="M10.9 12.8L20.4 8.4L20.7 21.8L10.6 20.4Z" fill="url(#g40)" stroke="#2a5a9a" stroke-width=".5" stroke-linejoin="round"/><path d="M10.9 12.8L20.4 8.4" stroke="#300" stroke-width=".7" stroke-dasharray="1.6 1" opacity=".7"/><path d="M4 12.4L10 13.4L9.8 20L4.2 19Z" fill="#a80000" stroke="#2a5a9a" stroke-width="2.4" stroke-linejoin="miter"/><path d="M4 12.4L10 13.4L9.8 20L4.2 19Z" fill="none" stroke="#5f93d1" stroke-width="1.4" stroke-linejoin="miter"/><path d="M9.6 5L21.6 7.2L21.4 22.4" fill="none" stroke="#2a5a9a" stroke-width="2.6" stroke-linejoin="miter"/><path d="M9.6 5L21.6 7.2L21.4 22.4" fill="none" stroke="#5f93d1" stroke-width="1.6" stroke-linejoin="miter"/></svg>
<svg style="left:753px;top:144px" width="24" height="24" viewBox="0 0 24 24"><defs><linearGradient id="g41" x1="0" y1="0" x2="1" y2="1"><stop offset="0" stop-color="#d81010"/><stop offset="1" stop-color="#a00000"/></linearGradient></defs><g transform="translate(0.9 0)"><path d="M8.9 15.3C13 13.6 16 11 17.2 7.2L22.2 16.2C20.4 18.6 17 20.4 13.3 21.4L8.6 22.5Z" fill="url(#g41)" stroke="#2a0000" stroke-width=".6" stroke-linejoin="round"/><path d="M4.5 12.8C6.6 10.6 7.8 8 8.1 4.8L17.2 7C16 11 13 13.6 8.9 15.3Z" fill="#f42a2a" stroke="#2a0000" stroke-width=".6" stroke-linejoin="round"/><path d="M10.6 18.6L13.4 17.6M15.4 13.4L16.8 11.6" stroke="#5f93d1" stroke-width="1.5" opacity=".6"/><path d="M1.9 14L8.3 16L8.1 22.4L1.9 20Z" fill="#a00000" stroke="#2a5a9a" stroke-width="2.4" stroke-linejoin="miter"/><path d="M1.9 14L8.3 16L8.1 22.4L1.9 20Z" fill="none" stroke="#5f93d1" stroke-width="1.4" stroke-linejoin="miter"/><path d="M2.6 18.2H6V20.4L2.6 19.6Z" fill="#2a5a9a"/><path d="M7.5 3.2L17.8 6L22.6 15.8" fill="none" stroke="#2a5a9a" stroke-width="2.6" stroke-linejoin="round"/><path d="M7.5 3.2L17.8 6L22.6 15.8" fill="none" stroke="#5f93d1" stroke-width="1.6" stroke-linejoin="round"/><ellipse cx="21.6" cy="3.7" rx="1.5" ry="1.9" transform="rotate(20 21.6 3.7)" fill="#17365f" stroke="#2a5a9a" stroke-width=".9"/></g></svg>
<svg style="left:789px;top:144px" width="24" height="24" viewBox="0 0 24 24"><defs><linearGradient id="g42" x1="0" y1="0" x2="1" y2="1"><stop offset="0" stop-color="#f22a2a"/><stop offset="1" stop-color="#e41c1c"/></linearGradient></defs><g transform="translate(0.9 0)"><path d="M1.6 6.6L10.6 3.5L20.8 5.1L12.8 7.9Z" fill="#f22a2a" stroke="#400000" stroke-width=".8" stroke-linejoin="round"/><path d="M1.6 6.6L12.8 7.9V21.8L1.8 20.3Z" fill="url(#g42)" stroke="#400000" stroke-width=".8" stroke-linejoin="round"/><path d="M12.8 7.9L20.8 5.1L20.6 18.4L12.8 21.8Z" fill="#b80000" stroke="#400000" stroke-width=".8" stroke-linejoin="round"/><path d="M12.8 7.9V21.8M1.8 20.3L12.8 21.8L20.2 18.4" fill="none" stroke="#2a5a9a" stroke-width="2.2"/><path d="M12.8 7.9V21.8M1.8 20.3L12.8 21.8L20.2 18.4" fill="none" stroke="#5f93d1" stroke-width="1.2"/><circle cx="12.8" cy="7.9" r="1.9" fill="#5f93d1" stroke="#2a5a9a" stroke-width=".7"/><circle cx="1.9" cy="20.3" r="1.9" fill="#5f93d1" stroke="#2a5a9a" stroke-width=".7"/><circle cx="12.8" cy="21.8" r="1.9" fill="#5f93d1" stroke="#2a5a9a" stroke-width=".7"/><circle cx="20.2" cy="18.4" r="1.9" fill="#5f93d1" stroke="#2a5a9a" stroke-width=".7"/></g></svg>
<svg style="left:578px;top:154px" width="10" height="6" viewBox="0 0 10 6"><path d="M0 0H9L4.5 4.9Z" fill="#000"/></svg>
<svg style="left:823px;top:154px" width="10" height="6" viewBox="0 0 10 6"><path d="M0 0H9L4.5 4.9Z" fill="#000"/></svg>
<div style="left:598px;top:145px;width:1px;height:24px;background:#a8a6a1;"></div>
<div style="left:599px;top:145px;width:1px;height:24px;background:#fff;"></div>
<div style="left:843px;top:145px;width:1px;height:24px;background:#a8a6a1;"></div>
<div style="left:844px;top:145px;width:1px;height:24px;background:#fff;"></div>
<div style="left:998px;top:145px;width:1px;height:24px;background:#a8a6a1;"></div>
<div style="left:999px;top:145px;width:1px;height:24px;background:#fff;"></div>
<div style="left:1153px;top:145px;width:1px;height:24px;background:#a8a6a1;"></div>
<div style="left:1154px;top:145px;width:1px;height:24px;background:#fff;"></div>
<svg style="left:855px;top:144px" width="24" height="24" viewBox="0 0 24 24"><defs><linearGradient id="g43" x1="0" y1="0" x2="0" y2="1"><stop offset="0" stop-color="#7fa9db"/><stop offset="1" stop-color="#3d72b6"/></linearGradient></defs><path d="M1.2 13.4L17 3.4L22.8 5V23.5H1.2Z" fill="url(#g43)" stroke="#0b1a30" stroke-width=".9" stroke-linejoin="round"/><path d="M1.2 19.2L22.8 21.4" stroke="#2a5a9a" stroke-width=".8"/><path d="M1.2 13.4L8 17.2L22.8 14" stroke="#2a5a9a" stroke-width=".6" fill="none" opacity=".7"/><path d="M2.4 21.5L22.5 9.4" stroke="#e01010" stroke-width="1.8" stroke-dasharray="3 1.6"/><path d="M4.4 6.2L7.6 3.4L12.4 6V14.4L9 16.2L4.4 13.4Z" fill="#3465a4" stroke="#0b1a30" stroke-width=".8" stroke-linejoin="round"/><path d="M4.4 6.2L7.6 3.4L12.4 6L9 8.4Z" fill="#6c9fd8" stroke="#0b1a30" stroke-width=".7"/><path d="M9 8.4V16.2" stroke="#0b1a30" stroke-width=".7"/><path d="M11.8 12.4V18.6C11.8 21.6 22.5 21.6 22.5 18.6V12.4Z" fill="#edd400" stroke="#3c3200" stroke-width=".8"/><path d="M11.8 12.4C11.8 9 22.5 9 22.5 12.4C22.5 15.4 11.8 15.4 11.8 12.4Z" fill="#fce94f" stroke="#3c3200" stroke-width=".7"/><path d="M14 11.6L17.2 9.8L20.4 11.6" fill="none" stroke="#c4a000" stroke-width=".7"/></svg>
<svg style="left:891px;top:144px" width="24" height="24" viewBox="0 0 24 24"><defs><linearGradient id="g44" x1="0" y1="0" x2="0" y2="1"><stop offset="0" stop-color="#7fa9db"/><stop offset="1" stop-color="#3d72b6"/></linearGradient></defs><path d="M1.2 13.4L18 3.4L22.8 5V23.5H1.2Z" fill="url(#g44)" stroke="#0b1a30" stroke-width=".9" stroke-linejoin="round"/><path d="M1.2 19.2L22.8 21.4" stroke="#2a5a9a" stroke-width=".8"/><path d="M1.2 13.4L8 17.2L22.8 14" stroke="#2a5a9a" stroke-width=".6" fill="none" opacity=".7"/><path d="M4.8 10.0L8.0 11.4L4.8 12.9L1.6 11.4Z" fill="#5f93d1" stroke="#0b1a30" stroke-width=".7" stroke-linejoin="round"/><path d="M1.6 11.4L4.8 12.9L4.8 16.4L1.6 14.9Z" fill="#3465a4" stroke="#0b1a30" stroke-width=".7" stroke-linejoin="round"/><path d="M4.8 12.9L8.0 11.4L8.0 14.9L4.8 16.4Z" fill="#204a87" stroke="#0b1a30" stroke-width=".7" stroke-linejoin="round"/><path d="M12.3 10.0L15.4 11.4L12.3 12.8L9.2 11.4Z" fill="#fce94f" stroke="#3c3200" stroke-width=".7" stroke-linejoin="round"/><path d="M9.2 11.4L12.3 12.8L12.3 16.2L9.2 14.7Z" fill="#edd400" stroke="#3c3200" stroke-width=".7" stroke-linejoin="round"/><path d="M12.3 12.8L15.4 11.4L15.4 14.7L12.3 16.2Z" fill="#c4a000" stroke="#3c3200" stroke-width=".7" stroke-linejoin="round"/><path d="M19.4 10.0L22.6 11.4L19.4 12.9L16.2 11.4Z" fill="#fce94f" stroke="#3c3200" stroke-width=".7" stroke-linejoin="round"/><path d="M16.2 11.4L19.4 12.9L19.4 16.4L16.2 14.9Z" fill="#edd400" stroke="#3c3200" stroke-width=".7" stroke-linejoin="round"/><path d="M19.4 12.9L22.6 11.4L22.6 14.9L19.4 16.4Z" fill="#c4a000" stroke="#3c3200" stroke-width=".7" stroke-linejoin="round"/></svg>
<svg style="left:927px;top:144px" width="24" height="24" viewBox="0 0 24 24"><defs><linearGradient id="g45" x1="0" y1="0" x2="0" y2="1"><stop offset="0" stop-color="#7fa9db"/><stop offset="1" stop-color="#3d72b6"/></linearGradient></defs><path d="M1.2 13.4L18 3.4L22.8 5V23.5H1.2Z" fill="url(#g45)" stroke="#0b1a30" stroke-width=".9" stroke-linejoin="round"/><path d="M1.2 19.2L22.8 21.4" stroke="#2a5a9a" stroke-width=".8"/><path d="M1.2 13.4L8 17.2L22.8 14" stroke="#2a5a9a" stroke-width=".6" fill="none" opacity=".7"/><path d="M7.4 7.6L10.2 8.8L7.4 10.1L4.6 8.8Z" fill="#fce94f" stroke="#3c3200" stroke-width=".7" stroke-linejoin="round"/><path d="M4.6 8.8L7.4 10.1L7.4 13.2L4.6 11.9Z" fill="#edd400" stroke="#3c3200" stroke-width=".7" stroke-linejoin="round"/><path d="M7.4 10.1L10.2 8.8L10.2 11.9L7.4 13.2Z" fill="#c4a000" stroke="#3c3200" stroke-width=".7" stroke-linejoin="round"/><path d="M12.5 4.6L15.4 5.9L12.5 7.2L9.6 5.9Z" fill="#fce94f" stroke="#3c3200" stroke-width=".7" stroke-linejoin="round"/><path d="M9.6 5.9L12.5 7.2L12.5 10.4L9.6 9.0Z" fill="#edd400" stroke="#3c3200" stroke-width=".7" stroke-linejoin="round"/><path d="M12.5 7.2L15.4 5.9L15.4 9.0L12.5 10.4Z" fill="#c4a000" stroke="#3c3200" stroke-width=".7" stroke-linejoin="round"/><path d="M18.6 6.6L21.6 7.9L18.6 9.3L15.6 7.9Z" fill="#fce94f" stroke="#3c3200" stroke-width=".7" stroke-linejoin="round"/><path d="M15.6 7.9L18.6 9.3L18.6 12.6L15.6 11.2Z" fill="#edd400" stroke="#3c3200" stroke-width=".7" stroke-linejoin="round"/><path d="M18.6 9.3L21.6 7.9L21.6 11.2L18.6 12.6Z" fill="#c4a000" stroke="#3c3200" stroke-width=".7" stroke-linejoin="round"/><path d="M7.0 13.0L10.0 14.3L7.0 15.7L4.0 14.3Z" fill="#5f93d1" stroke="#0b1a30" stroke-width=".7" stroke-linejoin="round"/><path d="M4.0 14.3L7.0 15.7L7.0 19.0L4.0 17.6Z" fill="#3465a4" stroke="#0b1a30" stroke-width=".7" stroke-linejoin="round"/><path d="M7.0 15.7L10.0 14.3L10.0 17.6L7.0 19.0Z" fill="#204a87" stroke="#0b1a30" stroke-width=".7" stroke-linejoin="round"/><path d="M13.2 14.6L16.2 15.9L13.2 17.3L10.2 15.9Z" fill="#fce94f" stroke="#3c3200" stroke-width=".7" stroke-linejoin="round"/><path d="M10.2 15.9L13.2 17.3L13.2 20.6L10.2 19.2Z" fill="#edd400" stroke="#3c3200" stroke-width=".7" stroke-linejoin="round"/><path d="M13.2 17.3L16.2 15.9L16.2 19.2L13.2 20.6Z" fill="#c4a000" stroke="#3c3200" stroke-width=".7" stroke-linejoin="round"/><path d="M19.3 11.8L22.2 13.1L19.3 14.4L16.4 13.1Z" fill="#fce94f" stroke="#3c3200" stroke-width=".7" stroke-linejoin="round"/><path d="M16.4 13.1L19.3 14.4L19.3 17.6L16.4 16.2Z" fill="#edd400" stroke="#3c3200" stroke-width=".7" stroke-linejoin="round"/><path d="M19.3 14.4L22.2 13.1L22.2 16.2L19.3 17.6Z" fill="#c4a000" stroke="#3c3200" stroke-width=".7" stroke-linejoin="round"/></svg>
<svg style="left:963px;top:144px" width="24" height="24" viewBox="0 0 24 24"><defs><linearGradient id="g46" x1="0" y1="0" x2="0" y2="1"><stop offset="0" stop-color="#7fa9db"/><stop offset="1" stop-color="#3d72b6"/></linearGradient></defs><path d="M1.2 13.4L16 3.4L22.8 5V23.5H1.2Z" fill="url(#g46)" stroke="#0b1a30" stroke-width=".9" stroke-linejoin="round"/><path d="M1.2 19.2L22.8 21.4" stroke="#2a5a9a" stroke-width=".8"/><path d="M1.2 13.4L8 17.2L22.8 14" stroke="#2a5a9a" stroke-width=".6" fill="none" opacity=".7"/><path d="M6.4 4.4L9.4 5.7L6.4 7.1L3.4 5.7Z" fill="#fce94f" stroke="#3c3200" stroke-width=".7" stroke-linejoin="round"/><path d="M3.4 5.7L6.4 7.1L6.4 10.4L3.4 9.0Z" fill="#edd400" stroke="#3c3200" stroke-width=".7" stroke-linejoin="round"/><path d="M6.4 7.1L9.4 5.7L9.4 9.0L6.4 10.4Z" fill="#c4a000" stroke="#3c3200" stroke-width=".7" stroke-linejoin="round"/><path d="M15.7 3.0L22.4 5.9L15.7 9.0L9.0 5.9Z" fill="#fce94f" stroke="#3c3200" stroke-width=".7" stroke-linejoin="round"/><path d="M9.0 5.9L15.7 9.0L15.7 16.4L9.0 13.2Z" fill="#edd400" stroke="#3c3200" stroke-width=".7" stroke-linejoin="round"/><path d="M15.7 9.0L22.4 5.9L22.4 13.2L15.7 16.4Z" fill="#c4a000" stroke="#3c3200" stroke-width=".7" stroke-linejoin="round"/><path d="M9.7 15.0L13.0 16.5L9.7 18.0L6.4 16.5Z" fill="#5f93d1" stroke="#0b1a30" stroke-width=".7" stroke-linejoin="round"/><path d="M6.4 16.5L9.7 18.0L9.7 21.6L6.4 20.0Z" fill="#3465a4" stroke="#0b1a30" stroke-width=".7" stroke-linejoin="round"/><path d="M9.7 18.0L13.0 16.5L13.0 20.0L9.7 21.6Z" fill="#204a87" stroke="#0b1a30" stroke-width=".7" stroke-linejoin="round"/><path d="M17.6 14.4L21.8 16.2L17.6 18.2L13.4 16.2Z" fill="#fce94f" stroke="#3c3200" stroke-width=".7" stroke-linejoin="round"/><path d="M13.4 16.2L17.6 18.2L17.6 22.8L13.4 20.8Z" fill="#edd400" stroke="#3c3200" stroke-width=".7" stroke-linejoin="round"/><path d="M17.6 18.2L21.8 16.2L21.8 20.8L17.6 22.8Z" fill="#c4a000" stroke="#3c3200" stroke-width=".7" stroke-linejoin="round"/></svg>
<svg style="left:1009px;top:144px" width="24" height="24" viewBox="0 0 24 24"><defs><linearGradient id="g47" x1="0" y1="0" x2="0" y2="1"><stop offset="0" stop-color="#ef2929"/><stop offset="1" stop-color="#c00000"/></linearGradient></defs><path d="M2 15.7C2 9.8 4 6.4 6.8 5.5L14.3 2.6L24.1 6.7V18.1L12.8 23.1L2 19.7Z" fill="#204a87" stroke="#0b1a30" stroke-width="1" stroke-linejoin="round"/><path d="M6.8 5.5L14.3 2.6L24.1 6.7L19.1 7.2Z" fill="#729fcf" stroke="#0b1a30" stroke-width=".7" stroke-linejoin="round"/><path d="M2 15.7C2 9.8 4 6.4 6.8 5.5L19.1 7.2C15.6 8.4 13.4 11.6 13.1 17.3Z" fill="url(#g47)" stroke="#0b1a30" stroke-width=".8" stroke-linejoin="round"/><path d="M2 15.7L13.1 17.3L12.8 23.1L2 19.7Z" fill="#5f93d1" stroke="#0b1a30" stroke-width=".8" stroke-linejoin="round"/></svg>
<svg style="left:1045px;top:144px" width="24" height="24" viewBox="0 0 24 24"><defs><linearGradient id="g47" x1="0" y1="0" x2="0" y2="1"><stop offset="0" stop-color="#ef2929"/><stop offset="1" stop-color="#c00000"/></linearGradient></defs><path d="M2 14.9L9.4 4.7L14.6 2.6L23.9 6.7V17.8L12.6 23.1L2 19.7Z" fill="#204a87" stroke="#0b1a30" stroke-width="1" stroke-linejoin="round"/><path d="M9.4 4.7L14.6 2.6L23.9 6.7L20 7.8Z" fill="#729fcf" stroke="#0b1a30" stroke-width=".7" stroke-linejoin="round"/><path d="M2 14.9L9.4 4.7L20 7.8L12.6 17.3Z" fill="url(#g47)" stroke="#0b1a30" stroke-width=".8" stroke-linejoin="round"/><path d="M2 14.9L12.6 17.3V23.1L2 19.7Z" fill="#5f93d1" stroke="#0b1a30" stroke-width=".8" stroke-linejoin="round"/></svg>
<svg style="left:1081px;top:144px" width="24" height="24" viewBox="0 0 24 24"><path d="M12.4 2L23.9 6.3V18.9L13.2 24L2.1 18.9V6.3Z" fill="#4f86c6" stroke="#0b1a30" stroke-width="1" stroke-linejoin="round"/><path d="M12.4 2L23.9 6.3L13 10.4L2.1 6.3Z" fill="#6c9fd8" stroke="#0b1a30" stroke-width=".8" stroke-linejoin="round"/><path d="M7 7.2L19.6 7.6L13 10.4Z" fill="#c00000"/><path d="M4.8 9.2L12 11.6V21L5.6 17.8Z" fill="#ef2020" stroke="#0b1a30" stroke-width=".5"/><path d="M14.2 11.6L21.6 9V17.4L14.2 21Z" fill="#e01010" stroke="#0b1a30" stroke-width=".5"/><path d="M13 10.4V24" stroke="#0b1a30" stroke-width=".9"/></svg>
<svg style="left:1117px;top:144px" width="24" height="24" viewBox="0 0 24 24"><path d="M5.2 4.7L13.1 2L23.9 5.5V18.1L13.9 23.6L2.4 19.7Z" fill="#4f86c6" stroke="#0b1a30" stroke-width="1" stroke-linejoin="round"/><path d="M8.4 6.8L20.8 7.4V15.6L14.4 19.6L6.6 16.6Z" fill="#ef2020" stroke="#0b1a30" stroke-width=".8" stroke-linejoin="round"/><path d="M12.6 7V13.8L6.6 16.6M12.6 13.8L20.8 15.6" fill="none" stroke="#7a0000" stroke-width=".8"/><path d="M12.6 7L20.8 7.4V15.6L12.6 13.8Z" fill="#e41a1a"/><path d="M8.4 6.8L12.6 7V13.8L6.6 16.6Z" fill="#c80808"/><path d="M6.6 16.6L12.6 13.8L20.8 15.6L14.4 19.6Z" fill="#f23030"/></svg>
<svg style="left:1164px;top:144px" width="24" height="24" viewBox="0 0 24 24"><defs><radialGradient id="g48" cx="40%" cy="35%" r="70%"><stop offset="0" stop-color="#7fa9db"/><stop offset="1" stop-color="#2f62a5"/></radialGradient></defs><circle cx="16.3" cy="9.9" r="7" fill="#5f93d1" stroke="#204a87" stroke-width=".9"/><circle cx="9.2" cy="15.7" r="7.3" fill="url(#g48)" stroke="#17365f" stroke-width=".9"/></svg>
<svg style="left:464px;top:768px" width="16" height="16" viewBox="0 0 16 16"><path d="M1 1H9.6V4H4.2V6.4H8V9.2H4.2V14.6H1Z" fill="#e01010" stroke="#7a0000" stroke-width=".5"/><path d="M1 1H2.6V14.6H1Z" fill="#a00000"/><g transform="translate(10.6 10.4)"><path d="M0 -5.2L1.2 -3.6L3.2 -4.2L3.4 -2.2L5.2 -1.2L4 0.4L4.8 2.4L2.8 2.8L2 4.8L0 3.8L-2 4.8L-2.8 2.8L-4.8 2.4L-4 0.4L-5.2 -1.2L-3.4 -2.2L-3.2 -4.2L-1.2 -3.6Z" fill="#4a80c4" stroke="#204a87" stroke-width=".5"/><circle r="1.7" fill="#dcdad5" stroke="#204a87" stroke-width=".5"/></g></svg>
<svg style="left:560px;top:769px" width="16" height="16" viewBox="0 0 16 16"><path d="M3 3L13 13M13 3L3 13" stroke="#6f6f6c" stroke-width="3.8" stroke-linecap="round"/><path d="M3 3L13 13M13 3L3 13" stroke="#8c8c89" stroke-width="2" stroke-linecap="round"/></svg>
</body></html>
